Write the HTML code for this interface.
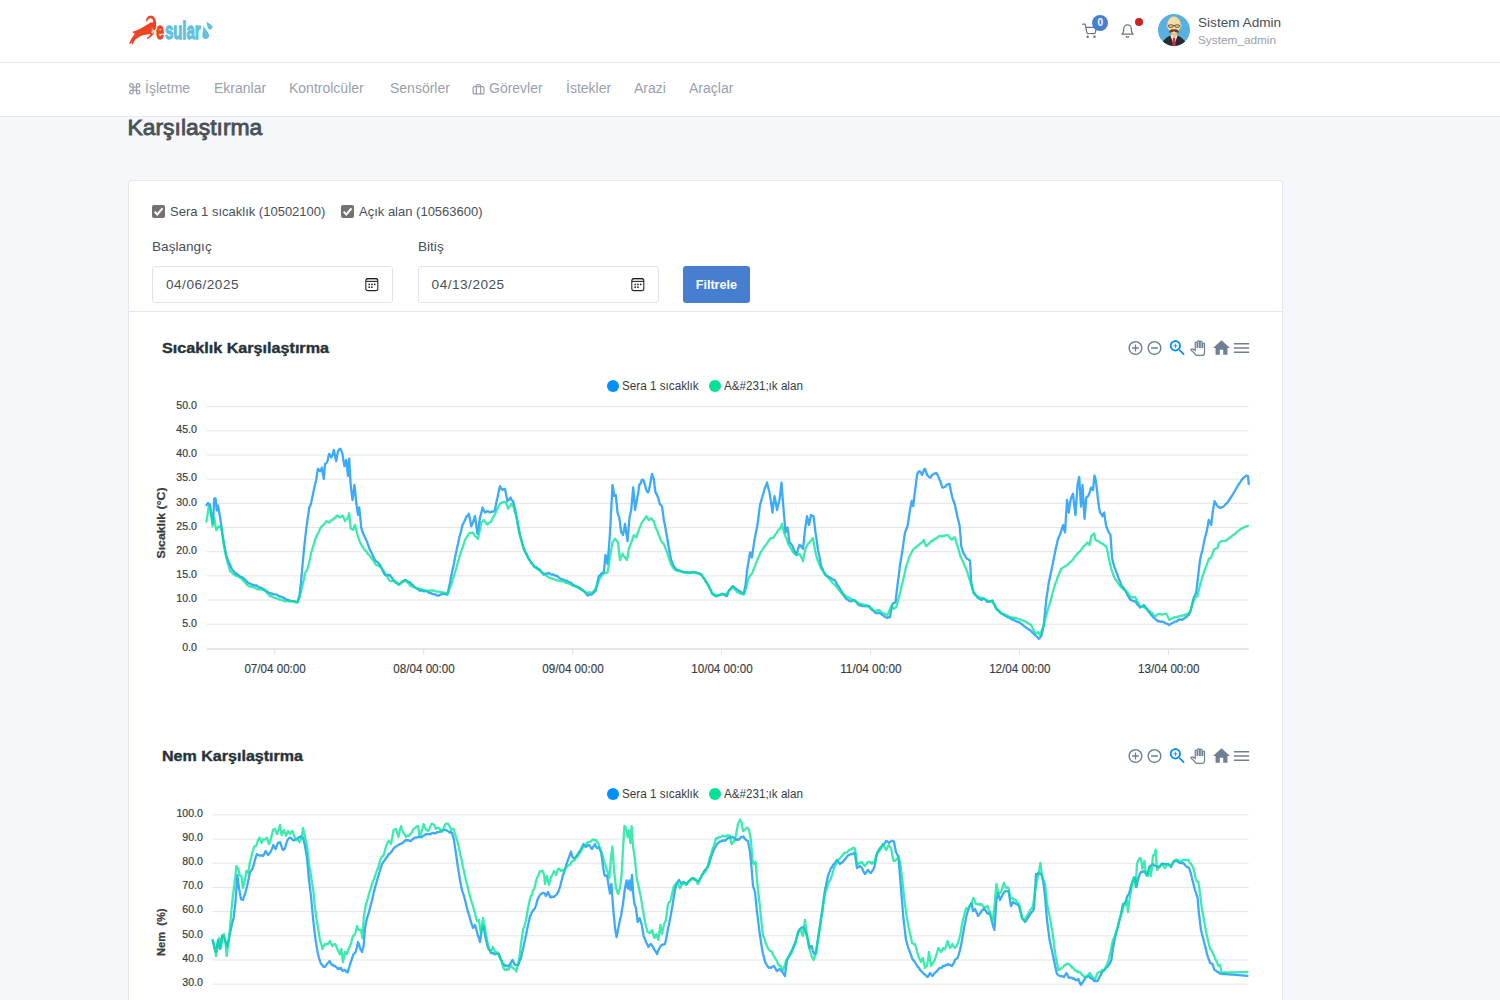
<!DOCTYPE html>
<html lang="tr">
<head>
<meta charset="utf-8">
<title>Karşılaştırma</title>
<style>
*{box-sizing:border-box}
html,body{margin:0;padding:0}
body{width:1500px;height:1000px;overflow:hidden;background:#f5f7fb;font-family:"Liberation Sans",sans-serif;color:#495057;font-size:14px;position:relative}
.abs{position:absolute}
#header{left:0;top:0;width:1500px;height:63px;background:#fff;border-bottom:1px solid #e3e7ef}
#nav{left:0;top:63px;width:1500px;height:54px;background:#fff;border-bottom:1px solid #e3e7ef}
#nav a{position:absolute;top:17px;color:#9aa0ac;font-size:14px;line-height:16px;text-decoration:none;white-space:nowrap}
#nav svg{position:absolute;top:19px}
h1{position:absolute;left:127.5px;top:111.9px;margin:0;font-size:22.9px;line-height:30px;font-weight:normal;color:#495057;-webkit-text-stroke:0.85px #495057;letter-spacing:0;white-space:nowrap}
#card{left:128px;top:180px;width:1155px;height:840px;background:#fff;border:1px solid #e3e7ef;border-radius:3px;box-shadow:0 1px 2px rgba(0,0,0,.04)}
.cb{position:absolute;top:205px;width:13px;height:13px;border-radius:2px;background:#737373}
.cbl{position:absolute;top:203.7px;font-size:13px;line-height:16px;white-space:nowrap;color:#495057}
.lbl{position:absolute;top:239px;font-size:13.6px;line-height:16px;color:#495057}
.inp{position:absolute;top:266px;width:241.4px;height:37px;border:1px solid #dfe3ec;border-radius:3px;background:#fff;font-size:13.6px;line-height:35px;padding-left:13px;color:#495057;letter-spacing:0.5px}
.inp svg{position:absolute;left:212.4px;top:10.9px}
#btn{left:682.6px;top:266px;width:67.6px;height:37px;background:#467fcf;border-radius:3px;color:#fff;font-weight:bold;font-size:12.6px;line-height:38.5px;text-align:center}
#hr{left:129px;top:311px;width:1153px;height:1px;background:#e3e7ef}
#uname{left:1198px;top:14px;font-size:13.6px;line-height:17px;color:#495057;white-space:nowrap}
#usub{left:1198px;top:32.6px;font-size:11.8px;line-height:15px;color:#9aa0ac;white-space:nowrap}
svg text{font-family:"Liberation Sans",sans-serif}
</style>
</head>
<body>
<div id="header" class="abs"></div>
<div id="nav" class="abs">
  <svg style="left:127.5px" width="13.500" height="13.500" viewBox="0 0 24 24" fill="none" stroke="#9aa0ac" stroke-width="2.4" stroke-linecap="round" stroke-linejoin="round"><path d="M18 3a3 3 0 0 0-3 3v12a3 3 0 0 0 3 3 3 3 0 0 0 3-3 3 3 0 0 0-3-3H6a3 3 0 0 0-3 3 3 3 0 0 0 3 3 3 3 0 0 0 3-3V6a3 3 0 0 0-3-3 3 3 0 0 0-3 3 3 3 0 0 0 3 3h12a3 3 0 0 0 3-3 3 3 0 0 0-3-3z"/></svg>
  <a style="left:145px">İşletme</a>
  <a style="left:214px">Ekranlar</a>
  <a style="left:289px">Kontrolcüler</a>
  <a style="left:390px">Sensörler</a>
  <svg style="left:472px;top:20px" width="13" height="12.500" preserveAspectRatio="none" viewBox="0 0 24 24" fill="none" stroke="#9aa0ac" stroke-width="2.2" stroke-linecap="round" stroke-linejoin="round"><rect x="2" y="7" width="20" height="14" rx="2"/><path d="M16 21V5a2 2 0 0 0-2-2h-4a2 2 0 0 0-2 2v16"/></svg>
  <a style="left:489px">Görevler</a>
  <a style="left:566px">İstekler</a>
  <a style="left:634px">Arazi</a>
  <a style="left:689px">Araçlar</a>
</div>

<!-- logo -->
<svg class="abs" style="left:120px;top:5px" width="110" height="50" viewBox="0 0 110 50">
  <g transform="scale(0.07333)"><path d="M355 215 L362 180 L385 155 L420 143 L455 155 L480 190 L492 240 L492 290 L488 320 L470 345 L455 335 L448 350 L462 375 L455 400 L430 425 L400 450 L375 465 L365 450 L395 425 L415 400 L400 395 L350 405 L300 415 L270 430 L245 450 L215 465 L195 495 L175 535 L160 533 L168 500 L150 528 L122 525 L145 480 L165 440 L185 420 L200 395 L185 380 L165 372 L180 360 L215 350 L260 330 L310 305 L350 280 L390 255 L425 235 L448 240 L452 215 L440 190 L415 178 L392 190 L375 212 L368 232 Z" fill="#ee4426"/>
  <path d="M432 318 L446 322 L440 345 L452 372 L440 392 L428 372 L436 350 Z" fill="#fff" opacity="0.85"/></g>
  <text x="36.200" y="33.700" font-size="24.300" font-weight="bold" fill="#ee4426" stroke="#ee4426" stroke-width="1.300" textLength="7.700" lengthAdjust="spacingAndGlyphs">e</text>
  <text x="44.900" y="33.700" font-size="24.300" font-weight="bold" fill="#5fc1dd" stroke="#5fc1dd" stroke-width="1.300" textLength="35.800" lengthAdjust="spacingAndGlyphs">sular</text>
  <path d="M83.600 21.200 L88.500 28.300 A3.500 3.500 0 1 1 82.200 30.300 Z" fill="#5fc1dd"/>
  <path d="M86.300 16.600 L91.700 20.300 A2.400 2.400 0 1 1 87.800 22.800 Z" fill="#5fc1dd"/>
</svg>

<!-- header right -->
<svg class="abs" style="left:1081.700px;top:22.800px" width="15" height="16" viewBox="0 0 24 24" fill="none" stroke="#6b7482" stroke-width="2" stroke-linecap="round" stroke-linejoin="round"><circle cx="9" cy="21" r="1"/><circle cx="20" cy="21" r="1"/><path d="M1 1h4l2.680 13.390a2 2 0 0 0 2 1.610h9.720a2 2 0 0 0 2-1.610L23 6H6"/></svg>
<div class="abs" style="left:1092.200px;top:15.200px;width:16px;height:16px;border-radius:8px;background:#467fcf;color:#fff;font-size:10px;font-weight:bold;line-height:16px;text-align:center">0</div>
<svg class="abs" style="left:1120px;top:23px" width="15" height="16" viewBox="0 0 24 24" fill="none" stroke="#6b7482" stroke-width="2" stroke-linecap="round" stroke-linejoin="round"><path d="M18 8A6 6 0 0 0 6 8c0 7-3 9-3 9h18s-3-2-3-9"/><path d="M13.730 21a2 2 0 0 1-3.460 0"/></svg>
<div class="abs" style="left:1134.500px;top:18.300px;width:8px;height:8px;border-radius:4px;background:#cd201f"></div>
<svg class="abs" style="left:1158px;top:14.250px" width="32" height="32" viewBox="0 0 32 32">
  <defs><clipPath id="av"><circle cx="16" cy="16" r="16"/></clipPath></defs>
  <circle cx="16" cy="16" r="16" fill="#58b0e0"/>
  <g clip-path="url(#av)">
    <path d="M3.500 32 C4.500 25.500 9 23 12.800 21.200 L19.200 21.200 C23 23 27.500 25.500 28.500 32Z" fill="#2b2b2b"/>
    <path d="M12.300 21 L16 31.500 L19.700 21Z" fill="#fff"/>
    <path d="M14.900 23.600 L17.100 23.600 L17.700 31.500 L14.300 31.500Z" fill="#d8304a"/>
    <rect x="13.200" y="16.500" width="5.600" height="6.300" rx="1.500" fill="#f0c27b"/>
    <ellipse cx="9.400" cy="11.800" rx="1" ry="1.600" fill="#f3cf92"/>
    <ellipse cx="22.600" cy="11.800" rx="1" ry="1.600" fill="#f3cf92"/>
    <ellipse cx="16" cy="10.700" rx="6.700" ry="8.100" fill="#fbdc9e"/>
    <path d="M9.600 11.600 h12.800" stroke="#3c3c3c" stroke-width="0.900"/>
    <rect x="10.600" y="10.800" width="4.400" height="2.600" rx="1" fill="#d9c79a" stroke="#3c3c3c" stroke-width="0.700"/>
    <rect x="17" y="10.800" width="4.400" height="2.600" rx="1" fill="#d9c79a" stroke="#3c3c3c" stroke-width="0.700"/>
    <path d="M16 15.600 C13.800 14.600 11.600 15.800 10.600 18.600 C12.600 18.700 15 18.200 16 17.300 C17 18.200 19.400 18.700 21.400 18.600 C20.400 15.800 18.200 14.600 16 15.600Z" fill="#6a3a2e"/>
  </g>
</svg>
<div id="uname" class="abs">Sistem Admin</div>
<div id="usub" class="abs">System_admin</div>

<h1>Karşılaştırma</h1>

<div id="card" class="abs"></div>
<div class="cb" style="left:152px"><svg width="13" height="13" viewBox="0 0 13 13"><path d="M2.700 6.600 L5.300 9.400 L10.500 3.300" fill="none" stroke="#fff" stroke-width="2"/></svg></div>
<div class="cbl" style="left:170px">Sera 1 sıcaklık (10502100)</div>
<div class="cb" style="left:341px"><svg width="13" height="13" viewBox="0 0 13 13"><path d="M2.700 6.600 L5.300 9.400 L10.500 3.300" fill="none" stroke="#fff" stroke-width="2"/></svg></div>
<div class="cbl" style="left:359px">Açık alan (10563600)</div>
<div class="lbl" style="left:152px">Başlangıç</div>
<div class="lbl" style="left:418px">Bitiş</div>
<div class="inp" style="left:152px">04/06/2025<svg width="14" height="14" viewBox="0 0 14 14"><rect x="0.800" y="0.600" width="12" height="12" rx="2.200" fill="none" stroke="#2a2a2a" stroke-width="1.100"/><path d="M0.800 3.400h12" stroke="#2a2a2a" stroke-width="1.100"/><path d="M1.500 0.700h10.600" stroke="#111" stroke-width="0.800"/><circle cx="4.200" cy="6.400" r="0.850" fill="#222"/><circle cx="6.900" cy="6.400" r="0.850" fill="#222"/><circle cx="9.700" cy="6.400" r="0.850" fill="#222"/><circle cx="4.200" cy="9.200" r="0.850" fill="#222"/><circle cx="6.900" cy="9.200" r="0.850" fill="#222"/></svg></div>
<div class="inp" style="left:417.6px">04/13/2025<svg width="14" height="14" viewBox="0 0 14 14"><rect x="0.800" y="0.600" width="12" height="12" rx="2.200" fill="none" stroke="#2a2a2a" stroke-width="1.100"/><path d="M0.800 3.400h12" stroke="#2a2a2a" stroke-width="1.100"/><path d="M1.500 0.700h10.600" stroke="#111" stroke-width="0.800"/><circle cx="4.200" cy="6.400" r="0.850" fill="#222"/><circle cx="6.900" cy="6.400" r="0.850" fill="#222"/><circle cx="9.700" cy="6.400" r="0.850" fill="#222"/><circle cx="4.200" cy="9.200" r="0.850" fill="#222"/><circle cx="6.900" cy="9.200" r="0.850" fill="#222"/></svg></div>
<div id="btn" class="abs">Filtrele</div>
<div id="hr" class="abs"></div>

<!-- charts -->
<svg class="abs" style="left:0;top:0" width="1500" height="1000" viewBox="0 0 1500 1000">
  <defs>
    <g id="tb">
      <g transform="translate(1,0) scale(0.7)" fill="#6e8192"><path transform="translate(-12,-12)" d="M13 7h-2v4H7v2h4v4h2v-4h4v-2h-4V7zm-1-5C6.480 2 2 6.480 2 12s4.480 10 10 10 10-4.480 10-10S17.520 2 12 2zm0 18c-4.410 0-8-3.590-8-8s3.590-8 8-8 8 3.590 8 8-3.590 8-8 8z"/></g>
      <g transform="translate(20,0) scale(0.7)" fill="#6e8192"><path transform="translate(-12,-12)" d="M7 11v2h10v-2H7zm5-9C6.480 2 2 6.480 2 12s4.480 10 10 10 10-4.480 10-10S17.520 2 12 2zm0 18c-4.410 0-8-3.590-8-8s3.590-8 8-8 8 3.590 8 8-3.590 8-8 8z"/></g>
      <g transform="translate(43,0) scale(0.85)" fill="#008ffb"><g transform="translate(-12,-12)"><path d="M15.500 14h-.790l-.280-.270C15.410 12.590 16 11.110 16 9.500 16 5.910 13.090 3 9.500 3S3 5.910 3 9.500 5.910 16 9.500 16c1.610 0 3.090-.590 4.230-1.570l.270.280v.790l5 4.990L20.490 19l-4.990-5zm-6 0C7.010 14 5 11.990 5 9.500S7.010 5 9.500 5 14 7.010 14 9.500 11.990 14 9.500 14z"/><path d="M12 10h-2v2H9v-2H7V9h2V7h1v2h2v1z"/></g></g>
      <g transform="translate(63.200,0) scale(0.62)" fill="#fff" stroke="#6e8192" stroke-width="2"><path transform="translate(-12,-12)" d="M23 5.500V20c0 2.200-1.800 4-4 4h-7.300c-1.080 0-2.100-.430-2.850-1.190L1 14.830s1.260-1.230 1.300-1.250c.220-.190.490-.290.790-.290.220 0 .420.060.600.160.040.010 4.310 2.460 4.310 2.460V4c0-.830.670-1.500 1.500-1.500S11 3.170 11 4v7h1V1.500c0-.830.670-1.500 1.500-1.500S15 .670 15 1.500V11h1V2.500c0-.830.670-1.500 1.500-1.500s1.500.670 1.500 1.500V11h1V5.500c0-.830.670-1.500 1.500-1.500s1.500.670 1.500 1.500z"/></g>
      <g transform="translate(87,0) scale(0.85)" fill="#6e8192"><path transform="translate(-12,-12)" d="M10 20v-6h4v6h5v-8h3L12 3 2 12h3v8z"/></g>
      <g transform="translate(107,0) scale(0.85)" fill="#6e8192"><path transform="translate(-12,-12)" d="M3 18h18v-2H3v2zm0-5h18v-2H3v2zm0-7v2h18V6H3z"/></g>
    </g>
  </defs>

  <!-- chart 1 -->
  <text x="162" y="353" font-size="14" font-weight="bold" fill="#263238" stroke="#263238" stroke-width="0.35" textLength="167" lengthAdjust="spacingAndGlyphs">Sıcaklık Karşılaştırma</text>
  <use href="#tb" x="1134.500" y="348"/>
  <circle cx="613" cy="386" r="6" fill="#008ffb"/>
  <text x="622" y="390" font-size="12" fill="#373d3f" textLength="76.700" lengthAdjust="spacingAndGlyphs">Sera 1 sıcaklık</text>
  <circle cx="715" cy="386" r="6" fill="#00e396"/>
  <text x="724" y="390" font-size="12" fill="#373d3f" textLength="78.900" lengthAdjust="spacingAndGlyphs">A&amp;#231;ık alan</text>
  <g stroke="#e5e5e5" stroke-width="1"><line x1="206.7" x2="1248.7" y1="406.60" y2="406.60"/><line x1="206.7" x2="1248.7" y1="430.78" y2="430.78"/><line x1="206.7" x2="1248.7" y1="454.96" y2="454.96"/><line x1="206.7" x2="1248.7" y1="479.14" y2="479.14"/><line x1="206.7" x2="1248.7" y1="503.32" y2="503.32"/><line x1="206.7" x2="1248.7" y1="527.50" y2="527.50"/><line x1="206.7" x2="1248.7" y1="551.68" y2="551.68"/><line x1="206.7" x2="1248.7" y1="575.86" y2="575.86"/><line x1="206.7" x2="1248.7" y1="600.04" y2="600.04"/><line x1="206.7" x2="1248.7" y1="624.22" y2="624.22"/><line x1="206.7" x2="1248.7" y1="648.40" y2="648.40"/></g>
  <line x1="206.700" x2="1248.700" y1="649.300" y2="649.300" stroke="#e0e0e0" stroke-width="1"/><g stroke="#e0e0e0" stroke-width="1"><line x1="274.80" x2="274.80" y1="649" y2="655"/><line x1="423.75" x2="423.75" y1="649" y2="655"/><line x1="572.70" x2="572.70" y1="649" y2="655"/><line x1="721.65" x2="721.65" y1="649" y2="655"/><line x1="870.60" x2="870.60" y1="649" y2="655"/><line x1="1019.55" x2="1019.55" y1="649" y2="655"/><line x1="1168.50" x2="1168.50" y1="649" y2="655"/></g>
  <g font-size="11" fill="#373d3f" stroke="#373d3f" stroke-width="0.2" text-anchor="end"><text x="197" y="408.90" textLength="20.7" lengthAdjust="spacingAndGlyphs">50.0</text><text x="197" y="433.08" textLength="20.7" lengthAdjust="spacingAndGlyphs">45.0</text><text x="197" y="457.26" textLength="20.7" lengthAdjust="spacingAndGlyphs">40.0</text><text x="197" y="481.44" textLength="20.7" lengthAdjust="spacingAndGlyphs">35.0</text><text x="197" y="505.62" textLength="20.7" lengthAdjust="spacingAndGlyphs">30.0</text><text x="197" y="529.80" textLength="20.7" lengthAdjust="spacingAndGlyphs">25.0</text><text x="197" y="553.98" textLength="20.7" lengthAdjust="spacingAndGlyphs">20.0</text><text x="197" y="578.16" textLength="20.7" lengthAdjust="spacingAndGlyphs">15.0</text><text x="197" y="602.34" textLength="20.7" lengthAdjust="spacingAndGlyphs">10.0</text><text x="197" y="626.52" textLength="14.8" lengthAdjust="spacingAndGlyphs">5.0</text><text x="197" y="650.70" textLength="14.8" lengthAdjust="spacingAndGlyphs">0.0</text></g>
  <g font-size="12" fill="#373d3f" stroke="#373d3f" stroke-width="0.15" text-anchor="middle"><text x="275.10" y="672.7" textLength="61.4" lengthAdjust="spacingAndGlyphs">07/04 00:00</text><text x="424.05" y="672.7" textLength="61.4" lengthAdjust="spacingAndGlyphs">08/04 00:00</text><text x="573.00" y="672.7" textLength="61.4" lengthAdjust="spacingAndGlyphs">09/04 00:00</text><text x="721.95" y="672.7" textLength="61.4" lengthAdjust="spacingAndGlyphs">10/04 00:00</text><text x="870.90" y="672.7" textLength="61.4" lengthAdjust="spacingAndGlyphs">11/04 00:00</text><text x="1019.85" y="672.7" textLength="61.4" lengthAdjust="spacingAndGlyphs">12/04 00:00</text><text x="1168.80" y="672.7" textLength="61.4" lengthAdjust="spacingAndGlyphs">13/04 00:00</text></g>
  <text transform="translate(165.300,558.500) rotate(-90)" textLength="71" lengthAdjust="spacingAndGlyphs" font-size="11" font-weight="bold" fill="#373d3f" stroke="#373d3f" stroke-width="0.25">Sıcaklık (°C)</text>
  <path d="M206.2 506.2 L207.1 503.9 L208.0 503.0 L209.0 504.5 L210.0 504.5 L210.9 511.5 L211.8 517.1 L213.0 523.7 L214.2 498.6 L215.5 498.3 L216.8 510.6 L218.0 505.4 L219.2 512.5 L220.2 517.9 L221.2 525.0 L222.5 534.3 L223.8 542.5 L225.0 548.7 L226.2 555.0 L227.5 559.0 L228.8 562.5 L229.7 563.8 L230.6 566.2 L231.6 568.4 L232.5 570.0 L233.5 570.7 L234.5 572.5 L235.5 573.4 L236.5 573.5 L237.5 575.0 L238.5 575.0 L239.5 576.0 L240.5 577.0 L241.5 576.9 L242.5 577.5 L243.5 578.2 L244.5 579.4 L245.5 580.0 L246.5 581.2 L247.5 582.5 L248.5 582.9 L249.5 583.5 L250.5 583.7 L251.5 584.2 L252.5 585.0 L253.5 584.9 L254.5 585.5 L255.5 585.5 L256.5 585.5 L257.5 586.2 L258.5 587.1 L259.5 587.3 L260.5 587.9 L261.5 587.9 L262.5 588.8 L263.5 589.9 L264.5 590.4 L265.5 590.3 L266.5 591.2 L267.5 592.0 L268.5 592.6 L269.5 592.9 L270.5 593.5 L271.5 593.3 L272.5 593.8 L273.5 594.4 L274.5 594.4 L275.5 594.3 L276.5 594.8 L277.5 595.0 L278.5 595.9 L279.5 596.4 L280.5 596.5 L281.5 597.1 L282.5 597.5 L283.5 597.5 L284.5 598.2 L285.5 599.3 L286.5 599.4 L287.5 600.0 L288.5 599.9 L289.5 600.6 L290.5 601.0 L291.5 601.2 L292.5 601.2 L293.5 601.3 L294.5 601.5 L295.5 601.7 L296.5 602.2 L297.5 602.0 L298.5 598.5 L299.5 595.0 L300.4 587.4 L301.2 580.0 L302.1 570.0 L303.0 560.0 L304.0 549.4 L305.0 540.0 L306.2 529.3 L307.5 520.0 L308.4 514.1 L309.2 507.5 L310.2 506.0 L311.2 502.5 L312.5 496.5 L313.8 490.0 L315.0 484.8 L316.2 480.0 L317.1 473.5 L318.0 468.8 L319.0 470.0 L320.0 471.2 L320.9 470.6 L321.8 467.5 L322.8 473.8 L323.8 478.8 L325.0 463.8 L326.2 463.5 L327.5 461.2 L328.4 456.8 L329.2 453.8 L330.2 455.7 L331.2 457.5 L332.5 455.0 L333.8 450.0 L335.0 455.8 L336.2 461.2 L337.1 456.1 L338.0 451.2 L339.2 449.3 L340.5 448.8 L341.5 451.4 L342.5 453.8 L343.5 461.3 L344.5 466.2 L345.4 461.8 L346.2 460.0 L347.1 468.2 L348.0 475.8 L349.2 458.6 L350.5 482.5 L351.5 491.8 L352.5 500.0 L353.5 493.2 L354.5 485.0 L355.4 493.8 L356.2 502.5 L357.1 508.9 L358.0 514.9 L359.2 507.5 L360.2 516.7 L361.2 527.5 L362.5 531.8 L363.8 535.0 L365.0 537.6 L366.2 540.0 L367.2 542.1 L368.1 545.0 L369.1 547.5 L370.0 550.0 L371.0 551.8 L372.0 553.8 L373.0 556.0 L374.0 558.1 L375.0 560.0 L376.0 561.1 L377.0 562.0 L378.0 562.5 L379.0 563.7 L380.0 565.0 L381.0 566.6 L382.0 569.1 L383.0 571.4 L384.0 573.3 L385.0 575.0 L386.0 575.3 L387.0 575.3 L388.0 574.7 L389.0 575.4 L390.0 575.0 L390.9 576.8 L391.9 577.7 L392.8 579.2 L393.8 581.2 L394.8 581.4 L395.8 582.8 L396.8 582.9 L397.8 583.4 L398.8 584.5 L399.8 583.9 L400.8 582.8 L401.9 581.8 L402.9 581.1 L404.0 580.8 L405.0 580.0 L406.0 580.1 L407.0 580.8 L408.0 581.7 L409.0 582.0 L410.0 582.5 L411.0 583.3 L412.0 584.5 L413.0 585.0 L414.0 586.4 L415.0 587.5 L416.0 588.0 L417.0 588.4 L418.0 588.9 L419.0 590.3 L420.0 590.5 L421.0 590.7 L422.0 590.5 L423.0 591.1 L424.0 591.4 L425.0 591.2 L426.0 591.1 L427.0 591.4 L428.0 591.9 L429.0 592.9 L430.0 593.0 L431.0 592.9 L432.0 593.8 L433.0 594.1 L434.0 594.2 L435.0 594.5 L435.9 594.4 L436.9 595.5 L437.8 595.6 L438.8 595.5 L439.7 595.1 L440.6 594.3 L441.6 594.4 L442.5 593.8 L443.5 593.8 L444.5 594.1 L445.5 594.0 L446.5 594.5 L447.5 594.5 L448.8 588.0 L450.0 582.5 L451.2 576.0 L452.5 570.0 L453.8 564.3 L455.0 557.5 L455.9 553.6 L456.9 548.5 L457.8 544.9 L458.8 540.0 L459.7 536.0 L460.6 533.2 L461.6 529.1 L462.5 525.0 L463.8 522.4 L465.0 520.0 L465.9 518.0 L466.9 516.0 L467.8 516.0 L468.8 513.8 L470.0 519.2 L471.2 526.2 L472.2 524.3 L473.1 522.1 L474.1 518.9 L475.0 516.2 L476.2 524.4 L477.5 533.8 L478.8 526.2 L480.0 517.5 L481.2 513.4 L482.5 507.5 L483.8 510.4 L485.0 512.5 L486.2 511.9 L487.5 511.2 L488.8 511.6 L490.0 512.5 L490.9 511.9 L491.9 511.3 L492.8 511.9 L493.8 511.1 L495.0 510.0 L496.2 503.1 L497.5 497.5 L498.8 491.0 L500.0 486.2 L501.2 488.5 L502.5 490.0 L503.8 488.9 L505.0 488.8 L506.2 495.0 L507.5 501.2 L508.5 499.6 L509.5 499.5 L510.5 497.5 L511.8 500.2 L513.0 501.2 L514.1 504.9 L515.2 509.8 L516.2 515.0 L517.2 519.7 L518.1 525.8 L519.1 530.5 L520.0 535.0 L520.9 538.2 L521.9 541.5 L522.8 545.5 L523.8 548.8 L524.8 551.2 L525.8 553.3 L526.8 554.6 L527.8 557.2 L528.8 558.8 L529.8 560.5 L530.8 561.7 L531.8 563.8 L532.8 564.5 L533.8 566.2 L534.8 567.0 L535.8 566.8 L536.8 567.4 L537.8 568.7 L538.8 568.8 L539.8 569.6 L540.8 571.3 L541.8 572.3 L542.8 573.7 L543.8 574.5 L544.8 574.1 L545.8 573.7 L546.8 573.4 L547.8 573.7 L548.8 573.0 L549.8 573.5 L550.8 574.3 L551.9 574.7 L552.9 574.3 L554.0 575.1 L555.0 575.5 L556.0 575.6 L557.1 576.1 L558.1 576.7 L559.2 578.1 L560.2 578.5 L561.2 578.8 L562.3 579.5 L563.3 579.4 L564.4 580.1 L565.4 580.7 L566.5 580.7 L567.5 581.2 L568.5 582.0 L569.6 582.2 L570.6 582.7 L571.7 583.5 L572.7 584.8 L573.8 585.0 L574.8 585.6 L575.8 586.5 L576.9 586.5 L577.9 586.8 L579.0 587.8 L580.0 588.0 L581.0 589.3 L582.0 589.3 L583.0 590.9 L584.0 591.2 L585.0 592.5 L586.0 593.1 L587.0 594.9 L588.0 595.5 L589.1 594.6 L590.2 594.3 L591.4 594.7 L592.5 593.8 L593.5 592.8 L594.5 591.7 L595.5 591.2 L596.6 585.9 L597.7 581.0 L598.8 576.2 L600.0 575.3 L601.2 573.8 L602.5 572.7 L603.8 572.5 L604.6 564.2 L605.5 555.0 L606.5 559.2 L607.5 563.8 L608.5 552.5 L609.5 540.0 L610.4 525.7 L611.2 509.6 L612.5 485.0 L613.4 490.1 L614.2 496.2 L615.8 495.0 L616.6 502.9 L617.5 512.5 L618.4 515.3 L619.2 517.5 L620.2 524.2 L621.2 532.5 L622.1 533.0 L623.0 535.0 L624.0 530.1 L625.0 523.8 L626.2 532.2 L627.5 541.2 L628.5 529.5 L629.5 517.5 L630.4 513.7 L631.2 510.0 L632.2 498.4 L633.2 487.5 L634.1 497.8 L635.0 510.0 L636.2 504.0 L637.5 496.2 L638.4 491.7 L639.2 485.0 L640.5 483.6 L641.8 480.0 L642.8 479.7 L643.8 481.2 L645.0 485.0 L646.2 490.0 L647.1 491.5 L648.0 492.5 L649.0 489.8 L650.0 485.0 L651.0 479.5 L652.0 473.8 L652.9 476.7 L653.8 478.8 L654.6 486.0 L655.5 492.5 L656.8 494.5 L658.0 497.5 L659.0 501.1 L660.0 504.5 L661.0 505.0 L662.0 506.2 L662.9 512.6 L663.8 520.0 L665.0 525.6 L666.2 532.5 L667.5 539.7 L668.8 547.5 L670.0 554.3 L671.2 560.0 L672.5 563.1 L673.8 566.2 L674.7 567.4 L675.6 568.3 L676.6 569.5 L677.5 570.0 L678.5 570.2 L679.6 570.5 L680.6 570.8 L681.7 571.1 L682.7 572.0 L683.8 572.0 L684.8 572.5 L685.8 571.9 L686.9 572.1 L687.9 572.4 L689.0 572.5 L690.0 572.5 L691.0 572.6 L692.0 572.2 L693.0 572.0 L694.0 572.2 L695.0 572.5 L696.0 572.4 L697.1 573.2 L698.1 573.0 L699.2 573.4 L700.2 574.3 L701.2 574.5 L702.2 575.6 L703.1 577.6 L704.1 578.6 L705.0 580.0 L705.9 582.0 L706.9 582.7 L707.8 584.7 L708.8 586.2 L709.7 588.4 L710.6 589.5 L711.6 592.4 L712.5 593.8 L713.4 594.0 L714.4 595.3 L715.3 596.2 L716.2 596.2 L717.2 596.3 L718.1 595.4 L719.1 594.9 L720.0 595.0 L721.2 594.4 L722.5 593.8 L723.6 594.8 L724.8 594.8 L725.9 596.1 L727.0 596.2 L728.2 592.7 L729.5 590.0 L730.7 589.2 L731.8 587.0 L733.0 586.2 L734.1 586.9 L735.2 588.4 L736.2 588.8 L737.2 589.7 L738.1 590.4 L739.1 591.0 L740.0 591.2 L740.9 592.1 L741.9 592.7 L742.8 592.8 L743.8 593.8 L744.6 589.3 L745.5 585.0 L746.5 575.9 L747.5 567.5 L748.8 560.2 L750.0 552.5 L751.0 555.2 L752.0 557.5 L753.2 548.4 L754.5 540.0 L755.8 533.1 L757.0 527.5 L758.0 520.8 L759.0 513.1 L760.0 505.0 L761.2 500.7 L762.5 496.2 L763.8 492.0 L765.0 487.5 L766.0 485.8 L767.0 482.5 L768.2 487.4 L769.5 492.5 L770.5 498.9 L771.5 505.5 L772.5 512.5 L773.5 503.9 L774.5 496.2 L775.8 502.2 L777.0 510.0 L778.2 505.3 L779.5 500.0 L780.5 491.1 L781.5 482.7 L783.0 502.5 L784.2 516.7 L785.5 532.5 L786.5 529.8 L787.5 527.5 L788.5 534.5 L789.5 542.5 L790.5 543.2 L791.5 544.7 L792.5 546.2 L793.4 548.9 L794.4 550.5 L795.3 552.7 L796.2 555.0 L797.3 551.8 L798.4 548.0 L799.5 545.0 L800.7 545.6 L801.8 547.5 L803.0 548.8 L804.0 539.4 L805.0 530.0 L806.0 523.4 L807.0 516.2 L808.0 520.5 L809.0 525.0 L810.0 520.3 L811.0 515.0 L812.2 516.0 L813.5 516.2 L814.5 523.9 L815.5 532.5 L816.8 541.2 L818.0 550.0 L819.1 555.4 L820.2 560.5 L821.2 566.2 L822.2 568.2 L823.1 570.4 L824.1 572.9 L825.0 574.5 L826.0 575.7 L827.0 575.7 L828.0 576.8 L829.0 576.8 L830.0 578.0 L831.1 578.0 L832.2 579.0 L833.4 579.9 L834.5 580.0 L835.6 581.4 L836.7 583.8 L837.8 585.7 L838.9 586.8 L840.0 588.8 L841.1 590.8 L842.2 592.8 L843.3 594.2 L844.4 596.4 L845.5 598.0 L846.6 599.1 L847.8 599.7 L848.9 600.8 L850.0 601.2 L850.9 601.4 L851.9 601.1 L852.8 600.4 L853.8 600.0 L854.8 600.6 L855.8 601.7 L856.8 602.7 L857.8 604.1 L858.8 605.0 L859.8 605.5 L860.8 605.0 L861.8 605.9 L862.8 606.2 L863.8 606.2 L864.8 606.1 L865.8 606.3 L866.8 605.9 L867.8 606.5 L868.8 606.2 L869.8 606.8 L870.8 608.9 L871.9 609.7 L872.9 610.6 L874.0 611.2 L875.0 612.5 L876.0 613.1 L877.0 613.2 L878.0 612.4 L879.0 613.2 L880.0 613.0 L881.0 614.1 L882.1 614.7 L883.1 615.5 L884.2 615.9 L885.2 617.2 L886.2 617.5 L887.2 617.9 L888.1 617.1 L889.1 617.5 L890.0 617.0 L891.2 610.3 L892.5 603.8 L893.5 603.0 L894.5 602.7 L895.5 602.5 L896.5 593.3 L897.5 585.0 L898.8 575.4 L900.0 565.0 L901.2 558.0 L902.5 550.0 L903.8 540.7 L905.0 532.5 L906.2 529.5 L907.5 526.2 L908.8 518.0 L910.0 510.0 L910.9 504.9 L911.8 500.8 L913.2 506.2 L914.1 498.2 L915.0 491.2 L916.0 483.7 L917.0 475.0 L918.2 471.9 L919.5 471.2 L920.8 472.3 L922.0 475.0 L923.0 472.8 L924.0 469.6 L925.0 468.8 L926.2 472.5 L927.5 475.5 L928.8 476.8 L930.0 477.5 L931.0 477.3 L932.0 474.8 L933.0 474.5 L934.1 473.5 L935.2 473.6 L936.2 473.0 L937.5 474.7 L938.8 477.5 L939.7 480.2 L940.6 481.9 L941.6 485.4 L942.5 487.5 L943.4 487.5 L944.4 487.0 L945.3 486.7 L946.2 485.0 L947.3 484.7 L948.4 484.1 L949.5 483.8 L950.8 490.8 L952.0 496.2 L953.0 499.7 L954.0 502.2 L955.0 505.0 L956.2 511.0 L957.5 517.5 L958.5 520.9 L959.5 525.0 L960.4 535.0 L961.2 546.2 L962.5 550.4 L963.8 553.8 L964.8 555.0 L965.9 557.4 L967.0 558.8 L968.0 559.2 L969.0 560.1 L970.0 560.3 L971.2 582.5 L972.5 588.0 L973.8 592.5 L974.7 593.4 L975.6 595.0 L976.6 596.3 L977.5 597.5 L978.4 597.9 L979.4 598.8 L980.3 599.2 L981.2 600.0 L982.3 599.6 L983.4 598.6 L984.5 598.8 L985.5 599.8 L986.5 600.9 L987.5 602.0 L988.5 601.5 L989.5 601.3 L990.5 601.4 L991.5 601.0 L992.5 600.5 L993.4 602.6 L994.4 604.8 L995.3 606.6 L996.2 608.8 L997.2 609.3 L998.2 609.9 L999.2 611.1 L1000.2 612.3 L1001.2 613.0 L1002.2 614.1 L1003.2 614.7 L1004.2 615.0 L1005.2 616.1 L1006.2 616.2 L1007.2 616.7 L1008.2 617.6 L1009.2 617.6 L1010.2 618.5 L1011.2 618.8 L1012.2 619.8 L1013.2 619.5 L1014.2 619.9 L1015.2 620.9 L1016.2 621.2 L1017.2 621.8 L1018.2 622.1 L1019.2 622.2 L1020.2 623.1 L1021.2 623.8 L1022.2 624.4 L1023.2 625.1 L1024.2 626.4 L1025.2 626.8 L1026.2 627.5 L1027.2 628.4 L1028.1 629.2 L1029.1 629.6 L1030.0 630.0 L1030.9 630.9 L1031.9 632.1 L1032.8 633.0 L1033.8 633.8 L1034.8 634.9 L1035.8 635.9 L1036.8 636.6 L1037.8 637.9 L1038.8 638.8 L1040.0 637.6 L1041.2 636.2 L1042.5 631.1 L1043.8 625.0 L1045.0 612.8 L1046.2 600.0 L1047.5 591.6 L1048.8 582.5 L1049.7 578.4 L1050.6 574.1 L1051.6 569.5 L1052.5 565.0 L1053.8 558.6 L1055.0 552.5 L1056.0 547.6 L1057.0 543.6 L1058.0 538.8 L1059.1 536.8 L1060.2 533.8 L1061.2 531.2 L1062.2 527.6 L1063.2 525.0 L1064.1 529.3 L1065.0 532.5 L1066.0 516.2 L1067.0 500.0 L1067.9 506.2 L1068.8 512.5 L1069.8 504.7 L1070.8 498.8 L1071.9 496.3 L1073.0 493.8 L1074.2 504.9 L1075.5 515.0 L1076.5 499.8 L1077.5 485.0 L1078.4 480.7 L1079.2 477.0 L1080.1 492.6 L1081.0 506.6 L1082.5 485.0 L1083.5 501.9 L1084.5 518.8 L1085.4 509.0 L1086.2 497.5 L1087.5 496.7 L1088.8 495.0 L1090.0 491.0 L1091.2 487.5 L1092.1 489.2 L1093.0 490.2 L1094.5 475.5 L1095.4 478.9 L1096.2 483.8 L1097.1 491.2 L1098.0 500.0 L1099.0 507.0 L1100.0 512.5 L1101.2 513.9 L1102.5 516.2 L1103.4 513.6 L1104.2 512.5 L1105.2 520.0 L1106.2 526.2 L1107.5 529.4 L1108.8 532.5 L1109.6 533.5 L1110.5 535.0 L1112.0 557.5 L1113.2 562.8 L1114.5 567.5 L1115.5 569.6 L1116.5 572.7 L1117.5 575.0 L1118.4 577.7 L1119.4 580.3 L1120.3 582.2 L1121.2 585.0 L1122.2 586.4 L1123.1 587.2 L1124.1 588.8 L1125.0 590.0 L1126.0 591.5 L1127.0 594.1 L1128.0 596.1 L1129.0 597.4 L1130.0 599.5 L1131.0 599.5 L1132.0 600.7 L1133.0 600.8 L1134.0 601.3 L1135.0 601.2 L1136.0 602.0 L1137.0 604.2 L1138.0 605.1 L1139.0 606.0 L1140.0 607.5 L1140.9 606.8 L1141.9 606.5 L1142.8 605.9 L1143.8 605.0 L1144.7 605.9 L1145.6 607.6 L1146.6 608.4 L1147.5 610.0 L1148.5 611.8 L1149.5 612.4 L1150.5 614.2 L1151.5 615.3 L1152.5 616.2 L1153.5 617.4 L1154.5 618.0 L1155.5 619.3 L1156.5 619.9 L1157.5 621.2 L1158.5 621.0 L1159.6 621.7 L1160.6 621.5 L1161.7 622.0 L1162.7 621.6 L1163.8 622.0 L1164.8 622.8 L1165.8 623.4 L1166.8 623.6 L1167.8 624.0 L1168.8 625.0 L1169.8 624.4 L1170.8 624.0 L1171.8 623.1 L1172.8 622.7 L1173.8 622.5 L1174.8 621.5 L1175.8 621.6 L1176.8 621.4 L1177.8 620.2 L1178.8 620.0 L1179.8 619.2 L1180.8 619.7 L1181.8 619.6 L1182.8 619.5 L1183.8 618.8 L1184.8 618.1 L1185.8 617.1 L1186.8 616.9 L1187.8 615.3 L1188.8 615.0 L1190.0 612.1 L1191.2 608.8 L1192.5 602.7 L1193.8 597.5 L1195.0 594.9 L1196.2 592.5 L1197.1 585.0 L1198.0 577.5 L1199.0 568.6 L1200.0 560.0 L1201.2 554.6 L1202.5 550.0 L1203.8 543.4 L1205.0 537.5 L1206.0 534.2 L1207.0 530.0 L1207.9 524.9 L1208.8 520.0 L1210.0 522.6 L1211.2 525.0 L1212.1 517.0 L1213.0 510.4 L1214.5 501.2 L1215.5 502.9 L1216.5 504.6 L1217.5 506.2 L1218.8 507.1 L1220.0 508.0 L1220.9 507.6 L1221.9 507.1 L1222.8 506.7 L1223.8 506.2 L1224.7 505.3 L1225.6 504.4 L1226.6 503.4 L1227.5 502.5 L1228.5 501.0 L1229.5 499.5 L1230.5 498.0 L1231.5 496.5 L1232.5 495.0 L1233.5 493.2 L1234.5 491.5 L1235.5 489.8 L1236.5 488.0 L1237.5 486.2 L1238.5 484.8 L1239.5 483.2 L1240.5 481.8 L1241.5 480.2 L1242.5 478.8 L1243.4 477.9 L1244.4 477.1 L1245.3 476.3 L1246.2 475.5 L1247.1 475.9 L1248.0 476.2 L1248.8 485.0" fill="none" stroke="#008ffb" stroke-width="2.300" stroke-linejoin="round" stroke-opacity="0.76"/>
  <path d="M206.2 522.5 L207.5 515.0 L208.8 506.2 L209.6 508.8 L210.5 510.0 L211.5 517.5 L212.5 526.2 L213.4 521.4 L214.2 517.5 L215.2 524.2 L216.2 530.0 L217.5 528.4 L218.8 526.2 L220.0 527.1 L221.2 527.5 L222.5 536.0 L223.8 545.0 L225.0 551.3 L226.2 557.5 L227.2 561.0 L228.1 564.4 L229.1 567.5 L230.0 571.2 L231.0 571.9 L232.0 572.7 L233.0 573.7 L234.0 574.6 L235.0 575.0 L236.0 575.9 L237.0 576.0 L238.0 576.5 L239.0 576.8 L240.0 577.5 L241.0 578.1 L242.0 579.1 L243.0 580.5 L244.0 581.4 L245.0 582.5 L245.9 583.3 L246.9 584.7 L247.8 585.3 L248.8 586.2 L249.8 586.5 L250.8 586.5 L251.8 586.6 L252.8 587.1 L253.8 587.5 L254.8 587.6 L255.8 588.3 L256.8 589.1 L257.8 589.2 L258.8 589.5 L259.8 589.1 L260.8 589.5 L261.8 589.3 L262.8 589.1 L263.8 588.8 L264.8 590.3 L265.8 591.5 L266.8 592.7 L267.8 593.6 L268.8 595.0 L269.8 595.9 L270.8 596.4 L271.8 596.2 L272.8 597.2 L273.8 597.5 L274.8 598.0 L275.8 598.1 L276.9 598.5 L277.9 598.8 L279.0 599.5 L280.0 599.5 L281.0 599.8 L282.1 600.3 L283.1 600.3 L284.2 601.0 L285.2 601.3 L286.2 601.2 L287.3 601.2 L288.3 601.3 L289.4 601.6 L290.4 601.4 L291.5 601.2 L292.5 601.2 L293.5 601.3 L294.5 601.6 L295.5 602.2 L296.5 602.0 L297.5 602.5 L298.8 599.7 L300.0 596.2 L301.2 590.4 L302.5 585.0 L303.8 579.7 L305.0 573.8 L306.0 571.5 L307.0 569.9 L308.0 567.5 L309.1 562.7 L310.2 557.5 L311.2 552.5 L312.2 549.4 L313.1 546.4 L314.1 543.2 L315.0 540.0 L316.0 537.5 L317.0 535.2 L318.0 533.3 L319.0 531.5 L320.0 528.8 L321.0 527.6 L322.1 525.7 L323.1 525.4 L324.2 524.0 L325.2 523.0 L326.2 521.2 L327.5 521.5 L328.8 522.5 L329.8 522.1 L330.8 520.4 L331.8 520.4 L332.8 519.2 L333.8 518.8 L334.7 517.6 L335.6 517.6 L336.6 515.8 L337.5 515.5 L338.8 516.5 L340.0 517.5 L341.2 517.0 L342.5 515.5 L343.8 518.0 L345.0 521.2 L346.0 519.6 L347.0 519.2 L348.0 517.4 L349.2 513.3 L350.8 528.8 L351.9 528.8 L353.0 530.0 L354.0 527.3 L355.0 525.0 L356.2 529.6 L357.5 535.0 L358.8 538.9 L360.0 542.5 L360.9 543.6 L361.9 546.1 L362.8 546.7 L363.8 548.8 L364.8 550.2 L365.8 550.8 L366.9 552.3 L367.9 554.0 L369.0 554.7 L370.0 556.2 L371.0 557.4 L372.1 559.3 L373.1 560.5 L374.2 561.7 L375.2 563.9 L376.2 565.0 L377.2 565.2 L378.2 565.6 L379.2 566.4 L380.2 567.1 L381.2 567.5 L382.2 569.2 L383.2 570.2 L384.2 571.9 L385.2 573.1 L386.2 575.0 L387.2 576.5 L388.1 578.3 L389.1 579.9 L390.0 581.2 L390.9 581.3 L391.9 580.8 L392.8 580.6 L393.8 580.0 L394.8 581.2 L395.8 582.0 L396.8 582.8 L397.8 584.1 L398.8 585.0 L399.8 584.0 L400.8 583.0 L401.9 582.5 L402.9 582.0 L404.0 580.5 L405.0 580.0 L406.0 581.1 L407.1 582.0 L408.1 583.1 L409.2 583.9 L410.2 585.6 L411.2 586.2 L412.3 586.5 L413.3 587.2 L414.4 587.4 L415.4 587.5 L416.5 588.4 L417.5 588.8 L418.6 588.7 L419.6 588.9 L420.7 589.1 L421.8 589.5 L422.9 589.7 L423.9 590.4 L425.0 590.5 L426.1 590.5 L427.1 590.9 L428.2 590.8 L429.3 590.9 L430.4 590.3 L431.4 590.5 L432.5 590.5 L433.6 590.5 L434.6 591.0 L435.7 591.2 L436.8 591.6 L437.9 591.7 L438.9 591.6 L440.0 592.0 L441.1 592.2 L442.1 592.5 L443.2 592.4 L444.3 592.6 L445.4 593.2 L446.4 593.2 L447.5 593.8 L448.4 591.7 L449.4 589.2 L450.3 586.9 L451.2 585.0 L452.2 581.6 L453.1 578.5 L454.1 575.4 L455.0 572.5 L456.0 569.0 L457.0 565.5 L458.0 561.8 L459.0 558.6 L460.0 555.0 L461.0 551.7 L462.0 549.4 L463.0 546.4 L464.0 543.2 L465.0 540.0 L465.9 538.4 L466.9 536.9 L467.8 535.4 L468.8 533.8 L469.7 532.9 L470.6 533.0 L471.6 532.8 L472.5 532.5 L473.8 534.0 L475.0 536.2 L476.0 536.6 L477.0 538.2 L478.0 538.8 L479.1 533.2 L480.2 527.9 L481.2 522.5 L482.5 521.8 L483.8 520.0 L484.7 521.3 L485.6 522.0 L486.6 524.0 L487.5 524.5 L488.4 523.5 L489.4 522.3 L490.3 522.3 L491.2 521.2 L492.2 518.7 L493.2 517.0 L494.2 515.7 L495.2 513.5 L496.2 511.2 L497.2 508.7 L498.1 507.4 L499.1 505.5 L500.0 503.8 L500.9 503.3 L501.9 502.4 L502.8 502.6 L503.8 502.0 L505.0 501.9 L506.2 503.0 L507.1 505.6 L508.0 508.8 L509.1 506.9 L510.2 506.0 L511.2 503.8 L512.5 505.0 L513.8 507.5 L514.8 512.0 L515.9 515.4 L517.0 520.0 L518.0 525.5 L519.0 530.7 L520.0 536.2 L520.9 539.3 L521.9 542.8 L522.8 545.5 L523.8 548.8 L524.8 550.4 L525.8 552.4 L526.8 554.4 L527.8 557.0 L528.8 558.8 L529.8 560.4 L530.8 562.1 L531.8 563.4 L532.8 564.4 L533.8 566.2 L534.8 567.1 L535.8 568.0 L536.8 568.7 L537.8 569.2 L538.8 570.0 L539.8 570.6 L540.8 571.5 L541.8 572.5 L542.8 572.8 L543.8 573.8 L544.8 574.5 L545.8 575.1 L546.9 576.2 L547.9 576.8 L549.0 577.6 L550.0 578.0 L551.0 578.6 L552.1 578.5 L553.1 578.8 L554.2 579.3 L555.2 579.5 L556.2 580.0 L557.3 580.2 L558.3 580.6 L559.4 581.0 L560.4 580.9 L561.5 581.3 L562.5 581.2 L563.5 581.3 L564.6 582.0 L565.6 582.9 L566.7 582.6 L567.7 583.3 L568.8 583.8 L569.8 583.8 L570.8 584.3 L571.9 585.3 L572.9 585.8 L574.0 586.0 L575.0 586.2 L576.0 586.5 L577.1 587.2 L578.1 587.7 L579.2 588.6 L580.2 589.1 L581.2 589.5 L582.2 590.1 L583.2 590.7 L584.2 591.0 L585.2 591.9 L586.2 592.5 L587.3 592.9 L588.3 592.7 L589.4 592.2 L590.4 592.5 L591.5 592.7 L592.5 592.5 L593.4 591.1 L594.4 590.3 L595.3 588.7 L596.2 587.5 L597.2 585.2 L598.1 582.4 L599.1 580.4 L600.0 577.5 L600.9 576.8 L601.9 575.7 L602.8 574.4 L603.8 573.8 L604.7 573.4 L605.6 572.7 L606.6 572.9 L607.5 572.5 L608.8 565.3 L610.0 557.5 L611.2 549.7 L612.5 542.5 L613.8 540.6 L615.0 538.8 L616.0 540.0 L617.0 541.2 L618.0 542.5 L619.0 551.4 L620.0 560.0 L621.2 557.2 L622.5 553.8 L623.8 555.8 L625.0 557.5 L626.0 558.7 L627.0 560.0 L627.9 554.8 L628.8 548.8 L630.0 545.5 L631.2 542.5 L632.5 539.0 L633.8 535.0 L635.0 536.4 L636.2 537.5 L637.5 534.0 L638.8 530.0 L640.0 527.3 L641.2 523.8 L642.5 521.5 L643.8 520.0 L645.0 518.3 L646.2 516.2 L647.5 518.0 L648.8 520.0 L650.0 519.2 L651.2 518.0 L652.5 520.2 L653.8 521.2 L655.0 525.2 L656.2 528.8 L657.5 531.3 L658.8 535.0 L660.0 538.1 L661.2 541.2 L662.5 542.7 L663.8 543.8 L665.0 547.2 L666.2 550.0 L667.5 553.9 L668.8 557.5 L670.0 561.5 L671.2 565.0 L672.2 565.9 L673.1 567.9 L674.1 568.9 L675.0 570.0 L676.0 570.3 L677.0 570.8 L678.0 571.1 L679.0 570.7 L680.0 571.2 L681.1 571.8 L682.1 572.0 L683.2 571.8 L684.3 572.4 L685.4 572.6 L686.4 572.5 L687.5 573.0 L688.6 573.2 L689.6 572.6 L690.7 572.9 L691.8 572.7 L692.9 572.4 L693.9 572.6 L695.0 572.5 L696.0 572.8 L697.1 572.9 L698.1 573.9 L699.2 573.5 L700.2 573.8 L701.2 574.5 L702.2 575.7 L703.1 577.3 L704.1 578.4 L705.0 579.5 L705.9 581.4 L706.9 582.9 L707.8 584.7 L708.8 586.2 L709.7 588.2 L710.6 590.2 L711.6 592.4 L712.5 594.5 L713.5 594.3 L714.5 594.6 L715.5 595.3 L716.5 595.0 L717.5 595.5 L718.5 595.4 L719.5 595.0 L720.5 594.4 L721.5 594.2 L722.5 593.8 L723.4 594.2 L724.4 594.4 L725.3 594.0 L726.2 594.5 L727.2 592.8 L728.1 591.5 L729.1 590.2 L730.0 588.8 L730.9 588.4 L731.9 588.0 L732.8 588.2 L733.8 588.0 L734.7 589.5 L735.6 590.1 L736.6 591.4 L737.5 592.5 L738.5 592.7 L739.6 593.1 L740.6 593.8 L741.7 593.7 L742.7 594.3 L743.8 594.5 L745.0 591.0 L746.2 587.5 L747.5 582.5 L748.8 577.5 L749.7 576.6 L750.6 574.7 L751.6 574.0 L752.5 572.5 L753.4 569.8 L754.4 567.6 L755.3 565.2 L756.2 562.5 L757.2 560.4 L758.1 558.0 L759.1 556.2 L760.0 553.8 L760.9 551.8 L761.9 550.7 L762.8 549.0 L763.8 547.5 L764.7 546.3 L765.6 545.3 L766.6 544.0 L767.5 542.5 L768.8 540.8 L770.0 538.8 L770.9 538.2 L771.9 537.8 L772.8 537.8 L773.8 537.5 L774.7 535.6 L775.6 534.1 L776.6 533.3 L777.5 531.2 L778.8 529.5 L780.0 528.8 L781.0 526.6 L782.0 523.8 L782.9 528.0 L783.8 532.3 L785.0 535.0 L785.9 537.3 L786.9 539.6 L787.8 542.5 L788.8 545.0 L789.7 546.2 L790.6 548.1 L791.6 549.5 L792.5 551.2 L793.4 552.5 L794.4 553.5 L795.3 554.0 L796.2 555.0 L797.3 554.7 L798.4 554.5 L799.5 553.8 L800.7 556.1 L801.8 558.4 L803.0 561.2 L804.2 554.8 L805.5 548.8 L806.8 546.0 L808.0 543.8 L809.2 542.7 L810.5 541.2 L811.8 539.5 L813.0 538.0 L814.0 543.9 L815.0 550.0 L816.2 555.3 L817.5 560.0 L818.4 562.0 L819.4 564.6 L820.3 566.7 L821.2 568.8 L822.2 569.9 L823.2 571.5 L824.2 572.4 L825.2 574.1 L826.2 575.0 L827.2 576.6 L828.2 577.5 L829.2 578.9 L830.2 580.4 L831.2 581.2 L832.2 582.4 L833.2 583.5 L834.2 584.5 L835.2 585.6 L836.2 586.2 L837.3 587.8 L838.3 589.4 L839.4 590.2 L840.4 591.8 L841.5 593.3 L842.5 594.5 L843.5 594.9 L844.6 595.4 L845.6 595.7 L846.7 596.9 L847.7 596.9 L848.8 597.5 L849.8 598.1 L850.8 599.1 L851.9 599.1 L852.9 600.4 L854.0 600.3 L855.0 601.2 L856.0 601.4 L857.0 602.1 L858.0 602.6 L859.0 603.6 L860.0 603.8 L861.1 604.3 L862.1 604.5 L863.2 604.4 L864.3 604.8 L865.4 604.8 L866.4 605.5 L867.5 605.5 L868.6 606.2 L869.6 607.0 L870.7 608.1 L871.8 608.5 L872.9 609.5 L873.9 610.8 L875.0 611.2 L875.9 610.6 L876.9 610.3 L877.8 610.1 L878.8 610.0 L879.7 610.6 L880.6 611.4 L881.6 612.1 L882.5 613.0 L883.5 613.3 L884.5 613.6 L885.5 614.0 L886.5 614.7 L887.5 615.0 L888.4 612.7 L889.4 610.5 L890.3 608.7 L891.2 606.2 L892.5 607.1 L893.8 608.8 L895.0 607.8 L896.2 607.5 L897.3 603.6 L898.4 599.1 L899.5 595.0 L900.5 591.1 L901.5 586.4 L902.5 582.5 L903.4 578.5 L904.4 574.7 L905.3 570.2 L906.2 566.2 L907.2 563.7 L908.1 560.7 L909.1 557.7 L910.0 555.0 L910.9 553.9 L911.9 551.8 L912.8 550.3 L913.8 548.8 L914.8 548.1 L915.8 547.1 L916.8 546.8 L917.8 545.8 L918.8 545.0 L919.8 544.1 L920.8 543.0 L921.8 542.5 L922.8 541.5 L923.8 540.0 L925.0 543.5 L926.2 546.2 L927.2 545.3 L928.1 544.3 L929.1 543.5 L930.0 542.5 L931.0 541.3 L932.0 540.6 L933.0 540.8 L934.0 539.1 L935.0 538.8 L935.9 538.6 L936.9 537.7 L937.8 537.3 L938.8 536.2 L939.8 535.8 L940.8 536.0 L941.8 536.6 L942.8 535.7 L943.8 536.2 L944.7 535.5 L945.6 535.5 L946.6 535.0 L947.5 535.0 L948.4 535.7 L949.4 537.4 L950.3 537.9 L951.2 539.5 L952.2 539.5 L953.1 538.7 L954.1 537.5 L955.0 537.5 L956.2 542.3 L957.5 546.2 L958.8 550.4 L960.0 555.0 L960.9 557.2 L961.9 559.4 L962.8 561.3 L963.8 563.8 L964.7 565.9 L965.6 567.8 L966.6 570.1 L967.5 572.5 L968.4 576.0 L969.4 579.0 L970.3 581.9 L971.2 585.0 L972.5 589.5 L973.8 593.8 L974.8 594.8 L975.8 595.0 L976.8 596.0 L977.8 596.5 L978.8 597.5 L979.8 597.4 L980.8 597.7 L981.8 598.0 L982.8 598.1 L983.8 598.8 L984.8 599.0 L985.8 599.7 L986.8 600.3 L987.8 601.0 L988.8 601.2 L989.7 601.6 L990.6 601.4 L991.6 601.3 L992.5 601.2 L993.4 603.5 L994.4 604.7 L995.3 606.6 L996.2 608.8 L997.2 610.0 L998.2 610.9 L999.2 611.5 L1000.2 612.7 L1001.2 613.8 L1002.2 613.8 L1003.2 614.2 L1004.2 614.4 L1005.2 614.7 L1006.2 615.0 L1007.2 615.7 L1008.2 616.2 L1009.2 616.5 L1010.2 617.0 L1011.2 617.5 L1012.2 617.4 L1013.2 617.9 L1014.2 618.2 L1015.2 617.7 L1016.2 618.0 L1017.2 618.6 L1018.2 619.0 L1019.2 619.3 L1020.2 619.2 L1021.2 620.0 L1022.2 620.4 L1023.2 620.6 L1024.2 621.0 L1025.2 621.7 L1026.2 622.0 L1027.2 622.7 L1028.2 623.3 L1029.2 624.0 L1030.2 624.6 L1031.2 625.0 L1032.2 627.2 L1033.1 629.0 L1034.1 631.8 L1035.0 633.8 L1036.0 633.4 L1037.0 632.9 L1038.0 632.0 L1039.0 633.6 L1040.0 635.0 L1041.0 632.1 L1042.0 629.8 L1043.0 627.5 L1044.1 623.0 L1045.2 619.3 L1046.2 615.0 L1047.2 611.9 L1048.1 608.5 L1049.1 606.0 L1050.0 602.5 L1050.9 599.4 L1051.9 595.9 L1052.8 592.2 L1053.8 588.8 L1054.7 585.8 L1055.6 582.9 L1056.6 580.6 L1057.5 577.5 L1058.4 575.5 L1059.4 572.9 L1060.3 571.3 L1061.2 568.8 L1062.2 568.2 L1063.1 567.4 L1064.1 566.8 L1065.0 566.2 L1065.9 565.8 L1066.9 565.0 L1067.8 564.5 L1068.8 563.8 L1069.7 562.5 L1070.6 562.0 L1071.6 560.8 L1072.5 560.0 L1073.4 559.1 L1074.4 557.3 L1075.3 556.1 L1076.2 555.0 L1077.2 554.1 L1078.1 553.0 L1079.1 552.2 L1080.0 551.2 L1080.9 550.4 L1081.9 548.5 L1082.8 547.8 L1083.8 546.2 L1084.7 545.5 L1085.6 544.7 L1086.6 543.4 L1087.5 542.5 L1088.5 543.7 L1089.5 545.0 L1090.4 540.5 L1091.2 536.2 L1092.2 535.4 L1093.2 534.3 L1094.2 533.4 L1095.5 540.0 L1096.6 540.6 L1097.8 540.9 L1098.9 541.8 L1100.0 542.5 L1101.0 543.2 L1102.1 543.6 L1103.1 544.0 L1104.2 545.1 L1105.2 546.0 L1106.2 546.2 L1107.5 551.6 L1108.8 557.5 L1110.0 563.2 L1111.2 568.8 L1112.5 572.6 L1113.8 576.2 L1114.7 578.1 L1115.6 579.5 L1116.6 580.8 L1117.5 582.5 L1118.4 583.5 L1119.4 585.3 L1120.3 586.1 L1121.2 587.5 L1122.2 587.9 L1123.2 589.3 L1124.2 589.5 L1125.2 590.4 L1126.2 591.2 L1127.2 592.4 L1128.2 593.6 L1129.2 595.2 L1130.2 596.1 L1131.2 597.5 L1132.2 597.3 L1133.1 597.2 L1134.1 597.4 L1135.0 597.0 L1136.0 598.5 L1137.0 600.8 L1138.0 602.3 L1139.0 604.1 L1140.0 606.2 L1141.0 606.6 L1142.0 606.7 L1143.0 606.7 L1144.0 607.3 L1145.0 607.5 L1146.0 608.6 L1147.0 609.1 L1148.0 609.7 L1149.0 610.7 L1150.0 611.2 L1151.0 612.6 L1152.0 613.0 L1153.0 614.1 L1154.0 615.6 L1155.0 616.2 L1155.9 616.0 L1156.9 614.8 L1157.8 614.5 L1158.8 613.8 L1159.7 614.2 L1160.6 614.2 L1161.6 614.5 L1162.5 614.5 L1163.4 614.3 L1164.4 613.9 L1165.3 613.7 L1166.2 613.8 L1167.3 615.5 L1168.4 618.0 L1169.5 620.0 L1170.6 619.1 L1171.6 618.8 L1172.7 618.0 L1173.8 617.5 L1174.8 617.2 L1175.8 617.5 L1176.9 616.8 L1177.9 616.6 L1179.0 616.4 L1180.0 616.2 L1181.0 615.8 L1182.0 615.5 L1183.0 615.5 L1184.0 615.5 L1185.0 615.0 L1186.0 614.2 L1187.0 614.4 L1188.0 613.6 L1189.0 612.6 L1190.0 612.5 L1191.2 608.3 L1192.5 603.8 L1193.8 600.5 L1195.0 597.5 L1196.2 596.9 L1197.5 596.2 L1198.8 590.3 L1200.0 585.0 L1200.9 581.9 L1201.9 578.8 L1202.8 575.9 L1203.8 572.5 L1205.0 569.4 L1206.2 566.2 L1207.5 562.7 L1208.8 558.8 L1210.0 558.3 L1211.2 557.5 L1212.5 553.5 L1213.8 550.0 L1214.7 548.9 L1215.6 548.8 L1216.6 548.1 L1217.5 547.5 L1218.4 545.0 L1219.2 542.5 L1220.2 541.9 L1221.2 541.2 L1222.2 541.2 L1223.1 541.2 L1224.1 541.2 L1225.0 541.2 L1226.0 540.5 L1227.0 539.8 L1228.0 539.0 L1229.0 538.2 L1230.0 537.5 L1231.0 536.8 L1232.0 536.0 L1233.0 535.2 L1234.0 534.5 L1235.0 533.8 L1236.0 532.9 L1237.0 532.0 L1238.0 531.2 L1239.0 530.4 L1240.0 529.5 L1241.0 529.0 L1242.0 528.4 L1243.0 527.9 L1244.0 527.3 L1245.0 526.8 L1245.9 526.4 L1246.9 526.1 L1247.8 525.8 L1248.8 525.5" fill="none" stroke="#00e396" stroke-width="2.300" stroke-linejoin="round" stroke-opacity="0.76"/>

  <!-- chart 2 -->
  <text x="162" y="761" font-size="14" font-weight="bold" fill="#263238" stroke="#263238" stroke-width="0.35" textLength="141" lengthAdjust="spacingAndGlyphs">Nem Karşılaştırma</text>
  <use href="#tb" x="1134.500" y="756"/>
  <circle cx="613" cy="794" r="6" fill="#008ffb"/>
  <text x="622" y="798" font-size="12" fill="#373d3f" textLength="76.700" lengthAdjust="spacingAndGlyphs">Sera 1 sıcaklık</text>
  <circle cx="715" cy="794" r="6" fill="#00e396"/>
  <text x="724" y="798" font-size="12" fill="#373d3f" textLength="78.900" lengthAdjust="spacingAndGlyphs">A&amp;#231;ık alan</text>
  <g stroke="#e5e5e5" stroke-width="1"><line x1="212.7" x2="1248.7" y1="814.90" y2="814.90"/><line x1="212.7" x2="1248.7" y1="839.08" y2="839.08"/><line x1="212.7" x2="1248.7" y1="863.26" y2="863.26"/><line x1="212.7" x2="1248.7" y1="887.44" y2="887.44"/><line x1="212.7" x2="1248.7" y1="911.62" y2="911.62"/><line x1="212.7" x2="1248.7" y1="935.80" y2="935.80"/><line x1="212.7" x2="1248.7" y1="959.98" y2="959.98"/><line x1="212.7" x2="1248.7" y1="984.16" y2="984.16"/><line x1="212.7" x2="1248.7" y1="1008.34" y2="1008.34"/></g>
  <g font-size="11" fill="#373d3f" stroke="#373d3f" stroke-width="0.2" text-anchor="end"><text x="203" y="816.70" textLength="26.6" lengthAdjust="spacingAndGlyphs">100.0</text><text x="203" y="840.88" textLength="20.7" lengthAdjust="spacingAndGlyphs">90.0</text><text x="203" y="865.06" textLength="20.7" lengthAdjust="spacingAndGlyphs">80.0</text><text x="203" y="889.24" textLength="20.7" lengthAdjust="spacingAndGlyphs">70.0</text><text x="203" y="913.42" textLength="20.7" lengthAdjust="spacingAndGlyphs">60.0</text><text x="203" y="937.60" textLength="20.7" lengthAdjust="spacingAndGlyphs">50.0</text><text x="203" y="961.78" textLength="20.7" lengthAdjust="spacingAndGlyphs">40.0</text><text x="203" y="985.96" textLength="20.7" lengthAdjust="spacingAndGlyphs">30.0</text><text x="203" y="1010.14" textLength="20.7" lengthAdjust="spacingAndGlyphs">20.0</text></g>
  <text transform="translate(165.300,956) rotate(-90)" textLength="47.500" lengthAdjust="spacingAndGlyphs" font-size="11" font-weight="bold" fill="#373d3f" stroke="#373d3f" stroke-width="0.25" xml:space="preserve">Nem  (%)</text>
  <path d="M212.4 940.0 L213.4 943.6 L214.4 948.0 L215.2 950.1 L216.0 952.0 L217.0 945.8 L218.0 940.0 L219.0 944.6 L220.0 949.0 L221.2 942.7 L222.4 936.0 L223.4 936.4 L224.4 938.0 L225.7 941.8 L227.0 947.0 L228.0 943.0 L229.0 938.0 L230.3 931.7 L231.6 926.0 L232.6 921.6 L233.6 918.0 L234.6 909.7 L235.6 900.0 L236.5 887.5 L237.4 875.0 L238.2 882.0 L239.0 888.0 L240.0 893.5 L241.0 899.0 L242.0 899.7 L243.0 900.0 L244.0 896.5 L245.0 894.0 L246.0 890.2 L247.0 886.5 L248.0 882.0 L249.0 877.0 L250.0 872.0 L251.2 870.8 L252.4 869.0 L253.7 864.7 L255.0 860.0 L256.0 856.4 L257.0 854.0 L258.0 854.9 L259.0 855.2 L260.0 855.6 L261.0 855.5 L262.0 855.2 L263.0 856.0 L264.3 854.0 L265.6 851.0 L266.8 853.0 L268.0 855.0 L269.0 854.0 L270.0 852.9 L271.0 851.0 L272.2 848.3 L273.4 845.0 L274.5 847.6 L275.6 849.0 L276.8 845.9 L278.0 843.0 L279.0 842.9 L280.0 842.0 L281.0 844.6 L282.0 847.9 L283.0 850.0 L284.0 849.5 L285.0 848.0 L286.3 843.4 L287.6 840.0 L288.8 838.3 L290.0 837.6 L291.2 838.2 L292.4 839.6 L293.7 840.5 L295.0 840.0 L296.0 839.2 L297.0 838.8 L298.0 838.0 L299.0 837.2 L300.0 836.9 L301.0 836.4 L302.0 837.0 L303.0 838.0 L304.0 841.8 L305.0 846.0 L306.0 852.1 L307.0 858.0 L308.0 869.1 L309.0 880.0 L310.0 888.6 L311.0 896.0 L312.0 907.3 L313.0 918.0 L314.3 929.6 L315.6 940.0 L316.8 947.5 L318.0 954.0 L319.0 958.0 L320.0 960.9 L321.0 964.0 L322.0 964.5 L323.0 966.5 L324.0 967.0 L325.0 966.7 L326.0 965.6 L327.0 964.0 L328.3 962.6 L329.6 961.0 L330.8 963.3 L332.0 965.0 L333.0 964.9 L334.0 966.1 L335.0 966.0 L336.0 967.1 L337.0 967.7 L338.0 969.0 L339.0 968.1 L340.0 968.8 L341.0 968.0 L342.0 970.2 L343.0 971.0 L344.0 969.9 L345.0 970.0 L346.3 971.6 L347.6 972.4 L348.6 969.1 L349.6 966.0 L350.6 962.5 L351.6 960.0 L352.6 956.7 L353.6 954.0 L354.6 953.4 L355.6 952.0 L356.8 947.5 L358.0 942.0 L359.0 944.4 L360.0 948.0 L361.0 950.2 L362.0 952.0 L362.8 948.4 L363.6 946.3 L365.0 928.0 L366.0 922.8 L367.0 918.0 L368.0 915.2 L369.0 912.0 L370.0 908.0 L371.0 904.0 L372.0 900.7 L373.0 896.0 L374.0 891.7 L375.0 887.4 L376.0 884.0 L377.0 880.8 L378.0 876.7 L379.0 874.0 L380.0 870.2 L381.0 867.2 L382.0 864.0 L383.0 862.8 L384.0 860.9 L385.0 860.0 L386.0 857.7 L387.0 857.2 L388.0 855.0 L389.0 853.7 L390.0 853.6 L391.0 852.0 L392.0 851.2 L393.0 849.2 L394.0 848.0 L395.0 847.2 L396.0 846.5 L397.0 846.0 L398.0 845.0 L399.0 844.6 L400.0 844.1 L401.0 843.7 L402.0 843.0 L403.0 842.9 L404.0 841.5 L405.0 840.7 L406.0 840.0 L407.0 840.6 L408.0 840.1 L409.0 840.5 L410.0 841.0 L411.0 841.0 L412.0 839.7 L413.0 839.1 L414.0 838.4 L415.0 837.4 L416.0 837.6 L417.0 837.5 L418.0 837.0 L419.0 836.3 L420.0 837.2 L421.0 837.2 L422.0 837.0 L423.0 835.6 L424.0 835.7 L425.0 834.7 L426.0 834.0 L427.0 834.3 L428.0 833.8 L429.0 834.3 L430.0 834.0 L431.0 834.1 L432.0 832.9 L433.0 832.8 L434.0 833.4 L435.0 833.0 L436.0 833.4 L437.0 832.1 L438.0 832.1 L439.0 832.0 L440.0 831.6 L441.0 830.9 L442.0 830.6 L443.0 830.1 L444.0 829.8 L445.0 829.6 L446.0 830.3 L447.0 830.5 L448.0 831.2 L449.0 832.0 L450.0 832.7 L451.0 832.0 L452.0 833.0 L453.0 836.6 L454.0 840.0 L455.0 847.3 L456.0 854.0 L457.0 860.7 L458.0 868.0 L459.0 873.6 L460.0 880.0 L461.0 885.4 L462.0 890.0 L463.0 893.0 L464.0 896.2 L465.0 900.0 L466.0 903.9 L467.0 908.3 L468.0 912.0 L469.0 914.8 L470.0 918.4 L471.0 922.0 L472.0 924.8 L473.0 928.0 L474.0 927.0 L475.0 925.0 L476.0 928.4 L477.0 932.0 L478.0 935.8 L479.0 938.2 L480.0 942.0 L481.0 934.8 L482.0 928.0 L482.8 927.2 L483.6 926.0 L484.6 932.5 L485.6 938.0 L486.8 942.9 L488.0 948.0 L489.0 949.3 L490.0 950.8 L491.0 953.0 L492.0 953.2 L493.0 953.0 L494.0 954.0 L495.0 954.3 L496.0 954.0 L497.0 953.6 L498.0 953.7 L499.0 954.0 L500.0 957.1 L501.0 959.5 L502.0 962.0 L503.0 963.8 L504.0 964.5 L505.0 966.0 L506.0 965.5 L507.0 965.7 L508.0 966.4 L509.0 966.0 L510.1 963.7 L511.3 961.8 L512.4 960.0 L513.7 962.4 L515.0 965.0 L516.0 964.9 L517.0 964.9 L518.0 965.0 L519.0 963.3 L520.0 959.9 L521.0 958.0 L522.0 952.6 L523.0 949.3 L524.0 944.0 L525.0 939.9 L526.0 935.3 L527.0 930.0 L528.0 925.2 L529.0 921.3 L530.0 916.0 L531.0 914.6 L532.0 912.0 L533.0 910.3 L534.0 909.7 L535.0 908.0 L536.0 905.1 L537.0 901.6 L538.0 898.0 L539.0 896.7 L540.0 895.0 L541.0 894.0 L542.0 893.4 L543.0 893.0 L544.0 893.0 L545.0 893.9 L546.0 896.0 L547.0 894.1 L548.0 892.0 L549.0 894.2 L550.0 897.0 L551.0 897.4 L552.0 896.4 L553.0 897.0 L554.0 896.9 L555.0 895.9 L556.0 895.0 L557.0 893.9 L558.0 892.2 L559.0 890.0 L560.0 886.9 L561.0 882.8 L562.0 879.0 L563.0 875.0 L564.0 872.7 L565.0 869.0 L566.0 865.5 L567.0 862.7 L568.0 860.0 L569.0 857.4 L570.0 854.4 L571.0 851.5 L572.4 857.0 L573.7 858.1 L575.0 858.0 L576.0 856.8 L577.0 855.1 L578.0 854.0 L579.0 852.0 L580.0 851.2 L581.0 849.0 L582.3 846.5 L583.6 844.0 L584.8 845.9 L586.0 847.0 L587.0 846.1 L588.0 845.2 L589.0 845.0 L590.0 846.4 L591.0 848.1 L592.0 849.0 L593.0 846.9 L594.0 846.1 L595.0 844.0 L596.0 846.6 L597.0 848.0 L598.0 847.9 L599.0 847.0 L600.0 850.0 L601.0 852.0 L602.0 858.3 L603.0 866.2 L604.4 875.0 L605.7 876.0 L607.0 875.4 L608.4 884.0 L609.2 888.7 L610.0 893.7 L611.4 884.0 L612.2 895.0 L613.0 906.0 L614.0 916.9 L615.0 928.0 L615.8 932.5 L616.6 937.0 L617.5 932.9 L618.4 928.0 L619.7 921.3 L621.0 916.0 L622.0 909.4 L623.0 904.0 L624.0 895.5 L625.0 888.0 L625.8 884.0 L626.6 880.4 L628.0 888.7 L629.4 880.5 L630.6 890.4 L632.0 875.0 L633.2 893.7 L634.4 904.0 L635.2 905.7 L636.0 908.0 L636.8 914.8 L637.6 922.0 L638.6 920.2 L639.6 918.0 L640.6 921.1 L641.6 924.0 L642.6 929.8 L643.6 936.0 L644.8 938.6 L646.0 942.0 L647.2 944.3 L648.4 947.0 L649.7 945.0 L651.0 944.0 L652.3 946.1 L653.6 948.0 L654.7 950.3 L655.9 951.8 L657.0 954.0 L658.3 950.4 L659.6 948.0 L660.8 946.0 L662.0 945.0 L663.0 944.5 L664.0 944.5 L665.0 944.0 L666.0 939.4 L667.0 934.0 L668.0 928.8 L669.0 924.0 L670.0 919.4 L671.0 914.0 L672.0 908.2 L673.0 902.0 L674.0 895.9 L675.0 890.0 L676.0 886.3 L677.0 883.0 L678.0 881.5 L679.0 880.0 L680.3 882.3 L681.6 884.0 L682.8 882.9 L684.0 882.0 L685.0 882.9 L686.0 883.3 L687.0 884.0 L688.0 882.3 L689.0 881.4 L690.0 880.0 L691.0 879.6 L692.0 878.1 L693.0 878.0 L694.0 878.6 L695.0 879.2 L696.0 880.0 L697.0 880.9 L698.0 881.3 L699.0 881.0 L700.0 878.8 L701.0 877.6 L702.0 875.0 L703.0 873.7 L704.0 871.3 L705.0 870.0 L706.0 868.9 L707.0 867.5 L708.0 867.0 L709.0 864.1 L710.0 860.6 L711.0 857.0 L712.0 854.9 L713.0 852.1 L714.0 849.0 L715.0 847.6 L716.0 846.0 L717.0 844.0 L718.0 843.3 L719.0 841.8 L720.0 841.6 L721.0 841.5 L722.0 840.5 L723.0 841.0 L724.0 840.2 L725.0 840.7 L726.0 840.0 L727.0 838.7 L728.0 838.1 L729.0 838.0 L730.0 837.1 L731.0 837.9 L732.0 837.0 L733.0 837.2 L734.0 837.7 L735.0 839.0 L736.0 839.8 L737.0 839.1 L738.0 840.0 L739.0 839.5 L740.0 838.2 L741.0 837.0 L742.3 837.2 L743.6 836.4 L744.8 838.8 L746.0 840.0 L747.0 840.6 L748.0 841.0 L749.0 846.9 L750.0 852.0 L750.8 859.4 L751.6 868.4 L753.0 886.0 L754.0 889.0 L755.0 892.0 L756.0 902.3 L757.0 912.0 L758.0 919.4 L759.0 928.0 L760.0 935.3 L761.0 942.0 L762.0 948.6 L763.0 954.0 L764.0 957.4 L765.0 962.0 L766.0 963.4 L767.0 965.4 L768.0 967.0 L769.0 967.8 L770.0 967.3 L771.0 968.0 L772.0 966.9 L773.0 966.3 L774.0 966.0 L775.0 967.8 L776.0 969.7 L777.0 971.0 L778.0 970.2 L779.0 969.5 L780.0 969.0 L781.0 970.2 L782.0 971.5 L783.0 973.0 L784.0 974.4 L785.0 976.0 L786.0 967.4 L787.0 960.0 L788.0 958.0 L789.0 956.7 L790.0 954.0 L791.0 951.9 L792.0 950.3 L793.0 948.0 L794.0 944.9 L795.0 942.9 L796.0 940.0 L797.0 937.0 L798.0 933.6 L799.0 930.0 L800.0 929.0 L801.0 928.0 L802.0 927.5 L803.0 927.0 L804.0 928.7 L805.0 930.0 L806.0 933.6 L807.0 936.0 L808.3 941.5 L809.6 948.0 L810.6 946.4 L811.6 946.0 L812.8 950.3 L814.0 954.0 L815.0 953.6 L816.0 952.0 L817.0 945.4 L818.0 938.6 L819.0 932.0 L820.0 925.6 L821.0 918.2 L822.0 912.0 L823.0 904.3 L824.0 896.9 L825.0 890.0 L826.0 885.5 L827.0 880.4 L828.0 876.0 L829.0 873.0 L830.0 870.9 L831.0 868.0 L832.0 867.3 L833.0 865.0 L834.0 864.0 L835.0 863.0 L836.0 861.2 L837.0 860.0 L838.0 861.8 L839.0 862.8 L840.0 864.0 L841.0 863.0 L842.0 862.3 L843.0 862.0 L844.0 860.0 L845.0 859.3 L846.0 858.0 L847.0 856.8 L848.0 855.5 L849.0 855.0 L850.0 854.5 L851.0 854.1 L852.0 854.0 L853.0 854.1 L854.0 852.8 L855.0 853.0 L856.0 861.2 L857.0 868.0 L858.0 867.3 L859.0 866.8 L860.0 866.0 L861.0 867.0 L862.0 868.0 L863.0 870.5 L864.0 872.5 L865.0 874.0 L866.0 872.7 L867.0 871.3 L868.0 870.0 L869.0 871.3 L870.0 872.5 L871.0 873.0 L872.0 871.2 L873.0 870.0 L874.0 868.0 L875.0 864.0 L876.0 858.6 L877.0 854.0 L878.0 851.6 L879.0 849.6 L880.0 848.0 L881.0 847.3 L882.0 846.2 L883.0 845.0 L884.0 844.3 L885.0 842.8 L886.0 841.0 L887.0 841.3 L888.0 841.9 L889.0 843.0 L890.3 841.7 L891.6 841.0 L892.8 840.9 L894.0 841.6 L895.0 847.1 L896.0 852.0 L897.2 854.5 L898.4 856.0 L899.2 866.6 L900.0 876.0 L900.8 885.7 L901.6 896.0 L902.6 908.5 L903.6 920.0 L904.8 929.7 L906.0 940.0 L907.0 943.2 L908.0 947.0 L909.0 950.0 L910.0 952.1 L911.0 954.8 L912.0 958.0 L913.0 960.0 L914.0 960.7 L915.0 962.3 L916.0 964.0 L917.0 965.6 L918.0 967.2 L919.0 967.8 L920.0 970.0 L921.0 970.8 L922.0 971.9 L923.0 973.0 L924.0 974.0 L925.2 974.6 L926.4 976.1 L927.6 977.0 L928.8 975.6 L930.0 973.0 L931.2 974.3 L932.4 976.0 L933.6 974.7 L934.8 972.8 L936.0 972.0 L937.0 970.7 L938.0 970.2 L939.0 968.5 L940.0 968.0 L941.0 968.0 L942.0 967.6 L943.0 965.9 L944.0 966.0 L945.0 966.1 L946.0 964.8 L947.0 964.9 L948.0 964.0 L949.0 964.9 L950.0 964.7 L951.0 965.7 L952.0 966.0 L953.0 964.2 L954.0 962.4 L955.0 960.0 L956.3 958.7 L957.6 958.0 L958.8 954.4 L960.0 950.0 L961.0 945.6 L962.0 940.0 L963.0 934.2 L964.0 928.0 L965.0 923.4 L966.0 918.1 L967.0 914.0 L968.3 910.0 L969.6 906.0 L970.6 904.3 L971.6 903.3 L973.0 911.0 L974.0 910.2 L975.0 909.0 L976.0 911.4 L977.0 913.2 L978.0 916.0 L979.0 914.9 L980.0 913.5 L981.0 912.0 L982.0 910.2 L983.0 909.9 L984.0 908.0 L985.0 909.9 L986.0 910.8 L987.0 913.0 L988.0 913.9 L989.0 913.2 L990.0 914.0 L991.0 917.8 L992.0 922.0 L993.2 926.3 L994.4 930.0 L995.4 915.1 L996.4 900.0 L997.2 896.6 L998.0 893.0 L999.0 896.7 L1000.0 900.0 L1001.0 897.9 L1002.0 895.7 L1003.0 894.0 L1004.0 892.5 L1005.0 891.4 L1006.0 891.0 L1007.3 891.3 L1008.6 891.0 L1009.8 898.9 L1011.0 906.0 L1012.0 904.1 L1013.0 902.0 L1014.0 903.0 L1015.0 903.1 L1016.0 904.0 L1017.0 904.3 L1018.0 905.2 L1019.0 906.0 L1020.0 910.5 L1021.0 913.4 L1022.0 918.0 L1023.0 919.3 L1024.0 920.3 L1025.0 922.0 L1026.0 921.0 L1027.0 919.1 L1028.0 918.0 L1029.0 916.1 L1030.0 914.5 L1031.0 913.0 L1032.0 911.7 L1033.0 910.7 L1034.0 909.0 L1035.0 891.3 L1036.0 874.0 L1037.0 874.4 L1038.0 873.2 L1039.0 873.6 L1040.0 873.5 L1041.0 874.0 L1042.0 876.4 L1043.0 880.0 L1044.0 887.5 L1045.0 896.0 L1046.0 908.4 L1047.0 920.0 L1048.3 930.3 L1049.6 940.0 L1050.7 944.9 L1051.9 950.2 L1053.0 956.0 L1054.0 960.4 L1055.0 965.3 L1056.0 969.9 L1057.0 974.0 L1058.0 975.0 L1059.0 975.5 L1060.0 976.0 L1061.0 975.8 L1062.0 976.4 L1063.0 976.3 L1064.0 977.0 L1065.2 975.0 L1066.4 973.0 L1067.7 975.6 L1069.0 978.0 L1070.0 977.6 L1071.0 977.7 L1072.0 978.0 L1073.0 978.9 L1074.0 978.3 L1075.0 979.9 L1076.0 980.0 L1077.2 980.0 L1078.4 979.0 L1079.7 982.6 L1081.0 985.0 L1082.3 982.8 L1083.6 981.0 L1084.8 979.1 L1086.0 977.0 L1087.0 976.8 L1088.0 976.5 L1089.0 976.0 L1090.0 977.7 L1091.0 978.3 L1092.0 979.0 L1093.0 979.4 L1094.0 980.8 L1095.0 981.0 L1096.3 981.0 L1097.6 981.0 L1098.8 978.6 L1100.0 976.0 L1101.0 974.7 L1102.0 972.0 L1103.0 971.0 L1104.0 970.4 L1105.0 969.2 L1106.0 968.0 L1107.0 967.0 L1108.0 966.0 L1109.0 965.0 L1110.2 962.4 L1111.4 960.0 L1112.2 953.6 L1113.0 948.0 L1114.0 943.0 L1115.0 938.0 L1116.0 933.4 L1117.0 930.0 L1118.0 926.0 L1119.0 922.2 L1120.0 917.9 L1121.0 914.0 L1122.0 909.1 L1123.0 904.0 L1124.0 904.1 L1125.0 903.0 L1126.0 900.5 L1127.0 897.0 L1128.0 895.0 L1129.0 894.0 L1130.0 890.4 L1131.0 886.0 L1132.0 883.2 L1133.0 880.0 L1134.0 878.4 L1135.0 877.8 L1136.4 887.0 L1137.4 882.1 L1138.4 878.0 L1139.7 874.4 L1141.0 872.0 L1142.0 871.7 L1143.0 871.9 L1144.0 871.0 L1145.0 872.1 L1146.0 874.2 L1147.0 875.0 L1148.0 872.3 L1149.0 868.5 L1150.0 866.0 L1151.0 865.8 L1152.0 864.8 L1153.0 864.0 L1154.0 865.3 L1155.0 865.6 L1156.0 866.0 L1157.0 866.7 L1158.0 866.4 L1159.0 867.0 L1160.0 866.3 L1161.0 865.3 L1162.0 863.6 L1163.0 864.2 L1164.0 863.8 L1165.0 864.0 L1166.0 864.4 L1167.0 864.0 L1168.0 864.0 L1169.0 864.5 L1170.0 865.4 L1171.0 867.0 L1172.0 864.4 L1173.0 862.6 L1174.0 861.0 L1175.0 860.5 L1176.0 861.0 L1177.0 861.0 L1178.0 861.9 L1179.0 862.4 L1180.0 863.0 L1181.0 862.9 L1182.0 863.2 L1183.0 863.0 L1184.0 863.7 L1185.0 865.0 L1186.0 866.0 L1187.0 867.0 L1188.0 867.2 L1189.0 868.0 L1190.0 870.6 L1191.0 874.0 L1192.0 878.6 L1193.0 882.0 L1194.0 886.3 L1195.0 890.0 L1196.3 893.8 L1197.6 897.8 L1199.0 914.0 L1200.0 922.0 L1201.0 930.0 L1202.0 934.1 L1203.0 937.6 L1204.0 942.0 L1205.0 945.3 L1206.0 949.6 L1207.0 954.0 L1208.0 957.4 L1209.0 959.5 L1210.0 963.0 L1211.2 963.4 L1212.4 964.0 L1213.4 966.6 L1214.4 970.0 L1215.7 970.4 L1217.0 971.6 L1218.3 972.1 L1219.6 973.6 L1220.8 973.7 L1222.0 974.0 L1223.0 974.0 L1224.0 974.1 L1225.0 974.1 L1226.0 974.2 L1227.0 974.2 L1228.0 974.3 L1229.0 974.4 L1230.0 974.4 L1231.0 974.5 L1232.0 974.6 L1233.0 974.6 L1234.0 974.7 L1235.0 974.8 L1236.0 974.9 L1237.0 975.0 L1238.0 975.0 L1239.0 975.1 L1240.0 975.2 L1241.0 975.3 L1242.1 975.4 L1243.2 975.5 L1244.2 975.6 L1245.2 975.7 L1246.3 975.8 L1247.4 975.9 L1248.4 976.0" fill="none" stroke="#008ffb" stroke-width="2.300" stroke-linejoin="round" stroke-opacity="0.76"/>
  <path d="M212.4 939.0 L213.2 941.0 L214.0 944.0 L215.0 949.3 L216.0 956.0 L217.0 949.8 L218.0 943.4 L219.4 938.0 L220.2 942.2 L221.0 947.8 L222.4 935.0 L223.2 935.3 L224.0 934.0 L224.8 939.5 L225.6 944.5 L226.6 956.0 L227.5 949.5 L228.4 944.0 L229.2 936.1 L230.0 928.0 L231.0 915.6 L232.0 904.0 L232.8 896.9 L233.6 890.3 L235.0 879.5 L236.4 866.0 L237.2 867.8 L238.0 868.0 L239.0 872.1 L240.0 875.6 L241.4 876.0 L242.2 882.5 L243.0 888.0 L244.0 883.4 L245.0 879.7 L246.4 871.0 L247.2 872.2 L248.0 873.0 L249.0 867.9 L250.0 862.0 L251.2 857.6 L252.4 852.0 L253.2 850.2 L254.0 847.0 L255.0 846.0 L256.0 846.4 L257.0 843.4 L258.0 840.0 L258.8 839.1 L259.6 837.6 L260.6 840.3 L261.6 843.0 L262.6 840.4 L263.6 839.0 L264.6 839.5 L265.6 839.3 L267.0 837.6 L268.0 841.6 L269.0 844.0 L270.0 841.7 L271.0 838.0 L272.0 834.1 L273.0 830.0 L274.0 829.1 L275.0 829.0 L276.0 832.2 L277.0 834.1 L278.4 830.0 L279.2 828.2 L280.0 825.0 L280.8 830.6 L281.6 835.0 L282.8 832.5 L284.0 830.0 L285.0 832.8 L286.0 836.0 L287.0 833.7 L288.0 831.0 L289.0 832.4 L290.0 834.0 L291.2 831.9 L292.4 831.0 L293.4 833.6 L294.4 837.0 L295.7 839.1 L297.0 840.0 L298.3 840.2 L299.6 842.0 L300.6 839.2 L301.6 838.2 L303.0 828.0 L304.0 832.1 L305.0 837.0 L306.0 841.6 L307.0 846.0 L308.0 854.9 L309.0 864.0 L310.0 869.7 L311.0 876.0 L312.0 882.9 L313.0 888.0 L314.0 897.5 L315.0 908.0 L316.0 914.8 L317.0 922.0 L318.3 929.5 L319.6 938.0 L320.5 941.9 L321.5 944.9 L322.4 949.0 L323.7 946.2 L325.0 944.0 L326.0 944.4 L327.0 943.7 L328.0 944.0 L329.0 942.6 L330.0 941.0 L331.2 944.2 L332.4 946.0 L333.7 944.3 L335.0 944.0 L336.3 946.2 L337.6 950.0 L338.8 951.5 L340.0 954.5 L341.4 949.0 L342.2 955.7 L343.0 962.0 L344.0 956.5 L345.0 952.0 L346.0 952.7 L347.0 954.0 L348.0 950.4 L349.0 948.0 L350.0 945.9 L351.0 944.0 L352.0 939.2 L353.0 936.0 L354.0 935.4 L355.0 934.0 L356.0 930.7 L357.0 926.0 L358.0 928.8 L359.0 930.0 L360.0 929.9 L361.0 929.8 L362.4 938.0 L363.2 926.1 L364.0 916.0 L365.0 909.6 L366.0 904.0 L367.0 901.5 L368.0 897.8 L369.0 894.0 L370.0 890.5 L371.0 888.1 L372.0 884.0 L373.0 881.6 L374.0 879.2 L375.0 876.0 L376.0 873.0 L377.0 870.1 L378.0 868.0 L379.0 864.6 L380.0 860.7 L381.0 858.0 L382.0 856.5 L383.0 856.2 L384.0 854.0 L385.0 850.4 L386.0 846.5 L387.0 844.0 L388.0 841.7 L389.0 841.0 L390.0 841.9 L391.0 844.0 L392.3 837.5 L393.6 830.0 L394.8 829.3 L396.0 829.0 L397.2 832.6 L398.4 837.0 L399.7 830.8 L401.0 826.0 L402.0 829.9 L403.0 832.0 L404.0 833.5 L405.0 834.8 L406.0 837.0 L407.0 835.9 L408.0 835.5 L409.0 836.0 L410.0 834.1 L411.0 833.7 L412.0 832.0 L413.0 830.0 L414.0 828.5 L415.0 828.0 L416.0 827.3 L417.0 826.2 L418.0 826.0 L419.0 832.4 L420.0 837.0 L421.0 832.8 L422.0 830.0 L422.8 827.1 L423.6 824.0 L424.8 827.5 L426.0 830.0 L427.0 829.8 L428.0 830.9 L429.0 830.0 L430.3 826.8 L431.6 823.6 L432.8 823.8 L434.0 825.0 L435.0 826.8 L436.0 829.0 L437.0 827.8 L438.0 828.2 L439.0 828.0 L440.0 828.9 L441.0 831.4 L442.0 832.0 L443.0 830.3 L444.0 827.3 L445.0 825.0 L446.0 823.7 L447.0 823.6 L448.0 823.6 L449.0 825.3 L450.0 827.3 L451.0 830.0 L452.3 829.0 L453.6 829.0 L454.8 833.7 L456.0 837.0 L457.0 840.0 L458.0 843.5 L459.0 848.0 L460.0 853.4 L461.0 857.5 L462.0 862.0 L463.0 867.5 L464.0 871.2 L465.0 876.0 L466.0 880.7 L467.0 884.3 L468.0 888.0 L469.0 892.5 L470.0 896.4 L471.0 900.0 L472.0 903.3 L473.0 905.9 L474.0 910.0 L475.0 913.1 L476.0 918.0 L477.0 921.0 L478.0 921.2 L479.0 920.0 L480.0 927.8 L481.0 934.0 L482.0 925.7 L483.0 918.0 L484.0 923.3 L485.0 928.0 L486.0 934.5 L487.0 940.0 L488.0 944.8 L489.0 949.0 L490.0 950.6 L491.0 951.0 L492.0 949.1 L493.0 947.0 L494.0 949.8 L495.0 952.0 L496.0 952.7 L497.0 952.2 L498.0 953.0 L499.0 956.1 L500.0 958.5 L501.0 960.0 L502.0 962.2 L503.0 966.8 L504.0 969.0 L505.0 970.1 L506.0 969.8 L507.0 968.9 L508.0 970.0 L509.0 969.1 L510.0 966.0 L511.0 965.0 L512.0 967.2 L513.0 968.0 L514.0 969.0 L515.2 969.5 L516.4 971.6 L517.7 965.2 L519.0 960.0 L520.0 952.2 L521.0 944.0 L522.0 937.1 L523.0 930.0 L524.3 926.4 L525.6 922.0 L526.8 915.8 L528.0 908.0 L529.0 903.5 L530.0 899.1 L531.0 896.0 L532.0 894.4 L533.0 890.5 L534.0 889.0 L535.0 886.0 L536.0 881.0 L537.0 878.0 L538.0 876.2 L539.0 873.8 L540.0 871.0 L541.2 871.4 L542.4 870.4 L543.2 872.3 L544.0 874.7 L545.0 884.0 L546.0 879.5 L547.0 876.0 L548.0 880.8 L549.0 885.0 L550.0 880.7 L551.0 877.0 L552.0 875.7 L553.0 873.5 L554.0 871.0 L555.0 872.9 L556.0 875.0 L557.0 872.0 L558.0 869.0 L559.0 868.8 L560.0 869.5 L561.0 871.0 L562.0 870.7 L563.0 870.0 L564.0 870.2 L565.0 869.0 L566.0 868.2 L567.0 866.3 L568.0 865.8 L569.0 865.0 L570.0 864.5 L571.0 863.0 L572.0 861.1 L573.0 861.0 L574.0 860.6 L575.0 859.6 L576.0 857.3 L577.0 857.0 L578.0 855.6 L579.0 853.8 L580.0 853.0 L581.0 851.0 L582.0 849.2 L583.0 847.5 L584.0 846.5 L585.0 845.0 L586.0 845.1 L587.0 842.8 L588.0 842.1 L589.0 842.0 L590.0 841.6 L591.0 841.5 L592.0 840.2 L593.0 839.6 L594.0 839.6 L595.0 840.5 L596.0 840.0 L597.0 842.2 L598.0 842.6 L599.0 845.0 L600.0 848.7 L601.0 850.5 L602.0 854.0 L603.0 857.0 L604.0 861.3 L605.0 864.0 L606.0 866.9 L607.0 870.5 L608.0 872.4 L609.4 878.0 L610.2 868.7 L611.0 857.4 L612.4 846.4 L613.2 857.6 L614.0 870.0 L615.0 879.0 L616.0 888.0 L617.0 890.7 L618.0 894.0 L619.0 891.1 L620.0 888.0 L620.8 881.7 L621.6 874.4 L623.0 849.1 L624.4 826.0 L625.2 826.7 L626.0 828.0 L626.8 832.6 L627.6 837.0 L629.0 830.4 L630.4 843.0 L631.6 826.2 L633.0 846.0 L634.0 852.5 L635.0 860.0 L636.0 870.6 L637.0 880.0 L638.0 883.7 L639.0 888.0 L640.0 893.5 L641.0 898.0 L642.0 904.9 L643.0 910.0 L644.0 916.2 L645.0 922.0 L646.3 927.3 L647.6 932.0 L648.8 932.7 L650.0 933.0 L651.2 931.2 L652.4 930.0 L653.4 934.7 L654.4 938.0 L655.4 935.9 L656.4 934.0 L657.4 937.7 L658.4 940.0 L659.4 932.2 L660.4 925.0 L661.2 930.2 L662.0 934.0 L663.0 929.5 L664.0 924.0 L665.0 922.2 L666.0 920.0 L667.0 911.9 L668.0 904.0 L669.0 902.4 L670.0 902.0 L671.0 898.5 L672.0 894.0 L673.0 889.8 L674.0 886.0 L675.0 885.3 L676.0 883.3 L677.0 883.0 L678.0 883.9 L679.0 885.7 L680.0 888.0 L681.0 886.6 L682.0 883.4 L683.0 882.0 L684.0 883.7 L685.0 883.8 L686.0 885.0 L687.0 883.8 L688.0 882.1 L689.0 881.0 L690.0 880.6 L691.0 878.9 L692.0 879.0 L693.0 878.8 L694.0 879.8 L695.0 879.0 L696.0 880.1 L697.0 882.6 L698.0 884.0 L699.0 881.4 L700.0 879.0 L701.0 877.0 L702.0 874.8 L703.0 873.5 L704.0 873.0 L705.0 872.1 L706.0 870.3 L707.0 868.0 L708.0 864.9 L709.0 861.2 L710.0 857.0 L711.0 854.8 L712.0 850.4 L713.0 848.0 L714.0 845.0 L715.0 841.6 L716.0 838.4 L717.0 838.1 L718.0 838.3 L719.0 837.0 L720.0 837.1 L721.0 837.2 L722.0 836.0 L723.0 835.4 L724.0 836.5 L725.0 836.4 L726.0 836.2 L727.0 835.9 L728.0 835.0 L729.0 835.7 L730.0 836.0 L730.8 840.6 L731.6 844.0 L732.6 842.6 L733.6 842.0 L734.8 839.3 L736.0 835.0 L737.0 829.3 L738.0 824.0 L739.0 822.0 L740.0 819.6 L740.8 821.5 L741.6 822.4 L743.0 831.0 L744.0 830.2 L745.0 830.0 L746.0 828.3 L747.0 827.6 L748.0 828.5 L749.0 830.0 L750.0 835.2 L751.0 840.9 L752.4 860.0 L753.2 862.7 L754.0 864.0 L754.8 862.8 L755.6 861.8 L757.0 880.0 L758.0 889.6 L759.0 898.0 L760.0 907.6 L761.0 918.0 L762.0 926.8 L763.0 936.0 L764.0 937.8 L765.0 940.8 L766.0 944.0 L767.0 946.1 L768.0 948.3 L769.0 950.0 L770.0 950.9 L771.0 951.1 L772.0 952.0 L773.0 954.8 L774.0 956.2 L775.0 958.0 L776.0 959.4 L777.0 961.2 L778.0 964.0 L779.0 965.5 L780.0 966.2 L781.0 966.0 L782.0 968.8 L783.0 970.0 L784.0 967.4 L785.0 964.2 L786.0 961.0 L787.0 959.0 L788.0 957.2 L789.0 955.8 L790.0 955.0 L791.0 953.8 L792.0 951.7 L793.0 949.0 L794.3 946.5 L795.6 943.0 L796.8 936.9 L798.0 932.0 L799.0 930.9 L800.0 930.3 L801.0 930.0 L802.0 933.8 L803.0 936.0 L804.0 927.4 L805.0 920.0 L805.8 926.5 L806.6 932.0 L807.6 939.3 L808.6 946.0 L809.8 950.1 L811.0 954.0 L812.3 957.8 L813.6 960.0 L814.8 956.6 L816.0 954.0 L817.0 947.4 L818.0 940.1 L819.0 934.0 L820.0 926.6 L821.0 919.8 L822.0 914.0 L823.0 907.0 L824.0 900.0 L825.0 894.0 L826.0 889.9 L827.0 888.2 L828.0 884.0 L829.0 881.6 L830.0 880.7 L831.0 878.0 L832.0 875.0 L833.0 871.7 L834.0 868.0 L835.0 865.9 L836.0 864.1 L837.0 861.0 L838.0 860.7 L839.0 859.0 L840.0 858.4 L841.0 857.1 L842.0 856.0 L843.0 854.8 L844.0 853.0 L845.0 853.2 L846.0 852.7 L847.0 852.4 L848.0 851.5 L849.0 849.9 L850.0 849.6 L851.0 849.7 L852.0 848.5 L853.0 848.0 L854.0 847.7 L855.0 849.0 L856.0 855.9 L857.0 864.0 L858.0 864.3 L859.0 862.9 L860.0 863.0 L861.0 862.3 L862.0 862.0 L863.0 863.7 L864.0 865.3 L865.0 866.0 L866.0 864.4 L867.0 863.1 L868.0 862.0 L869.0 862.2 L870.0 861.8 L871.0 863.0 L872.0 863.7 L873.0 862.1 L874.0 863.0 L875.0 860.5 L876.0 855.7 L877.0 853.0 L878.0 851.4 L879.0 851.6 L880.0 850.0 L881.0 848.6 L882.0 845.5 L883.0 844.0 L884.0 846.1 L885.0 848.0 L886.0 850.0 L887.0 848.7 L888.0 846.1 L889.0 845.0 L890.0 847.1 L891.0 848.0 L892.3 855.4 L893.6 861.0 L894.8 860.9 L896.0 860.0 L897.2 858.8 L898.4 856.0 L899.2 859.8 L900.0 862.0 L901.2 870.8 L902.4 880.0 L903.4 890.6 L904.4 900.0 L905.7 909.6 L907.0 918.0 L908.3 925.2 L909.6 932.0 L910.8 936.8 L912.0 943.0 L913.0 943.5 L914.0 944.4 L915.0 944.0 L916.0 947.3 L917.0 951.6 L918.0 955.0 L919.0 958.0 L920.0 959.8 L921.0 962.0 L922.0 959.2 L923.0 958.0 L924.0 963.2 L925.0 968.0 L926.0 966.6 L927.0 966.0 L928.0 959.6 L929.0 952.0 L930.0 959.3 L931.0 966.0 L932.3 963.7 L933.6 962.0 L934.8 959.7 L936.0 956.0 L937.2 952.2 L938.4 948.0 L939.7 949.7 L941.0 952.0 L942.0 950.6 L943.0 948.0 L944.0 949.2 L945.0 949.0 L946.3 945.7 L947.6 941.0 L948.8 945.2 L950.0 948.0 L951.2 946.3 L952.4 944.0 L953.7 946.4 L955.0 948.0 L956.3 946.2 L957.6 944.0 L958.8 940.0 L960.0 936.0 L961.0 930.9 L962.0 924.0 L963.0 919.7 L964.0 916.0 L965.2 911.2 L966.4 908.0 L967.7 908.4 L969.0 908.0 L970.0 906.0 L971.0 904.0 L972.2 901.1 L973.4 898.0 L974.7 901.2 L976.0 904.0 L977.0 903.9 L978.0 904.1 L979.0 905.0 L980.0 903.9 L981.0 904.8 L982.0 904.0 L983.0 906.1 L984.0 907.0 L985.0 908.0 L986.3 906.3 L987.6 906.0 L988.8 909.9 L990.0 912.0 L991.2 917.6 L992.4 922.0 L993.4 915.0 L994.4 908.0 L995.4 895.1 L996.4 884.0 L997.4 889.6 L998.4 894.0 L999.7 893.2 L1001.0 892.0 L1002.0 889.2 L1003.0 885.1 L1004.0 883.0 L1005.0 885.9 L1006.0 888.0 L1007.2 887.2 L1008.4 888.0 L1009.4 893.0 L1010.4 898.0 L1011.7 897.9 L1013.0 899.0 L1014.0 899.1 L1015.0 900.4 L1016.0 900.0 L1017.0 901.8 L1018.0 903.2 L1019.0 904.0 L1020.0 908.3 L1021.0 913.1 L1022.0 918.0 L1023.2 919.7 L1024.4 921.0 L1025.7 917.7 L1027.0 916.0 L1028.0 913.8 L1029.0 912.9 L1030.0 910.0 L1031.0 909.1 L1032.0 908.0 L1033.0 906.0 L1034.3 896.6 L1035.6 888.0 L1036.8 882.3 L1038.0 876.0 L1039.2 870.0 L1040.4 863.0 L1041.4 870.9 L1042.4 878.0 L1043.7 880.9 L1045.0 884.0 L1046.0 893.4 L1047.0 904.0 L1048.0 907.8 L1049.0 914.0 L1050.0 918.0 L1051.0 924.8 L1052.0 929.6 L1053.0 936.0 L1054.3 946.5 L1055.6 956.0 L1056.5 960.5 L1057.5 965.6 L1058.4 970.0 L1059.6 969.9 L1060.8 968.3 L1062.0 968.0 L1063.0 967.2 L1064.0 965.6 L1065.0 965.0 L1066.0 964.7 L1067.0 963.5 L1068.0 964.0 L1069.0 964.2 L1070.0 965.0 L1071.0 966.0 L1072.0 967.7 L1073.0 967.3 L1074.0 969.0 L1075.0 970.5 L1076.0 971.0 L1077.0 970.6 L1078.0 972.5 L1079.0 972.0 L1080.0 972.4 L1081.0 973.3 L1082.0 975.0 L1083.0 975.1 L1084.0 977.1 L1085.0 977.0 L1086.0 976.6 L1087.0 976.4 L1088.0 975.0 L1088.8 974.0 L1089.6 973.0 L1090.8 974.3 L1092.0 977.0 L1093.0 977.4 L1094.0 978.3 L1095.0 979.0 L1096.0 977.4 L1097.0 974.0 L1098.0 972.7 L1099.0 972.2 L1100.0 972.0 L1101.0 972.0 L1102.0 970.0 L1103.0 970.0 L1104.0 970.3 L1105.0 969.0 L1106.0 966.3 L1107.0 964.5 L1108.0 962.0 L1109.0 958.3 L1110.0 954.0 L1111.0 949.7 L1112.0 944.0 L1113.0 940.2 L1114.0 938.0 L1115.0 936.0 L1116.0 932.1 L1117.0 930.0 L1118.0 926.4 L1119.0 921.1 L1120.0 918.0 L1121.0 915.1 L1122.0 910.8 L1123.0 908.0 L1124.0 906.0 L1125.0 905.0 L1125.8 901.7 L1126.6 899.7 L1128.0 912.0 L1129.0 903.7 L1130.0 896.0 L1131.0 890.9 L1132.0 884.0 L1133.0 880.7 L1134.0 877.0 L1134.8 881.3 L1135.6 886.9 L1137.0 864.0 L1138.0 860.9 L1139.0 859.0 L1140.0 858.0 L1141.0 858.8 L1142.4 869.0 L1143.4 865.8 L1144.4 861.0 L1145.2 867.8 L1146.0 874.0 L1147.0 875.9 L1148.0 876.0 L1148.8 870.7 L1149.6 867.7 L1151.0 876.0 L1152.0 865.9 L1153.0 855.3 L1154.4 854.6 L1155.6 849.7 L1157.0 870.0 L1158.3 868.0 L1159.6 867.0 L1160.8 864.6 L1162.0 863.6 L1163.0 865.0 L1164.0 866.6 L1165.0 868.0 L1166.0 866.7 L1167.0 865.1 L1168.0 864.0 L1169.0 865.1 L1170.0 865.9 L1171.0 866.0 L1172.0 865.1 L1173.0 862.5 L1174.0 862.0 L1175.0 860.6 L1176.0 859.9 L1177.0 859.6 L1178.0 859.9 L1179.0 861.3 L1180.0 862.0 L1181.0 860.8 L1182.0 860.9 L1183.0 860.0 L1184.0 859.7 L1185.0 859.8 L1186.0 860.0 L1187.2 860.2 L1188.4 859.6 L1189.7 862.6 L1191.0 864.0 L1192.3 865.9 L1193.6 869.0 L1194.8 874.2 L1196.0 880.0 L1197.2 881.9 L1198.4 882.0 L1199.2 887.5 L1200.0 894.0 L1201.0 901.1 L1202.0 910.0 L1203.2 915.4 L1204.4 922.0 L1205.7 929.6 L1207.0 936.0 L1208.0 940.4 L1209.0 944.8 L1210.0 948.0 L1211.0 950.0 L1212.0 951.2 L1213.0 954.0 L1214.0 955.7 L1215.0 958.4 L1216.0 960.0 L1217.2 962.8 L1218.4 966.0 L1219.2 964.9 L1220.0 964.8 L1221.4 972.4 L1222.5 972.4 L1223.6 972.4 L1224.6 972.4 L1225.7 972.4 L1226.8 972.4 L1227.8 972.4 L1228.9 972.4 L1230.0 972.4 L1231.0 972.4 L1232.0 972.4 L1233.0 972.3 L1234.0 972.3 L1235.0 972.3 L1236.0 972.3 L1237.0 972.3 L1238.0 972.2 L1239.0 972.2 L1240.0 972.2 L1241.0 972.2 L1242.1 972.2 L1243.2 972.1 L1244.2 972.1 L1245.2 972.1 L1246.3 972.0 L1247.4 972.0 L1248.4 972.0" fill="none" stroke="#00e396" stroke-width="2.300" stroke-linejoin="round" stroke-opacity="0.76"/>
</svg>
</body>
</html>
